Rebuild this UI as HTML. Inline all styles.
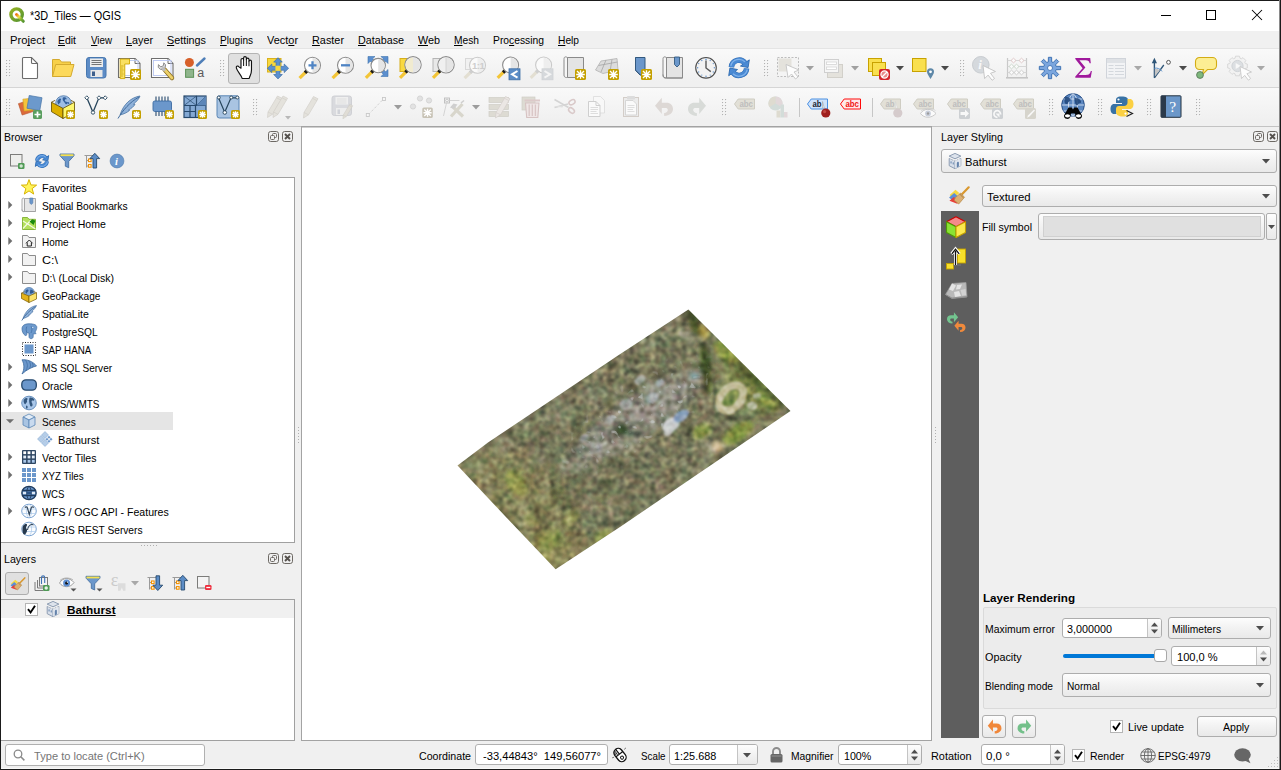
<!DOCTYPE html>
<html lang="en"><head><meta charset="utf-8"><title>*3D_Tiles — QGIS</title>
<style>
*{box-sizing:border-box;margin:0;padding:0}
html,body{width:1281px;height:770px;overflow:hidden}
body{background:#f0f0f0;font-family:"Liberation Sans",sans-serif;font-size:11px;color:#000;position:relative}
.a{position:absolute}
.t{position:absolute;white-space:nowrap;transform-origin:0 0}
u{text-decoration:underline;text-underline-offset:1px;text-decoration-skip-ink:none}
svg{overflow:visible}
</style></head>
<body>
<div class="a" style="left:0px;top:0px;width:1281px;height:31px;background:#fff;"></div>
<svg class="a" style="left:9px;top:7px;" width="16" height="16" viewBox="0 0 16 16"><defs><linearGradient id="qg" x1="0" y1="0" x2="1" y2="1"><stop offset="0" stop-color="#93b023"/><stop offset="1" stop-color="#589632"/></linearGradient><linearGradient id="qh" x1="0" y1="0" x2="1" y2="1"><stop offset="0" stop-color="#ee7913"/><stop offset="0.35" stop-color="#f0e64a"/><stop offset="0.7" stop-color="#80b02c"/><stop offset="1" stop-color="#589632"/></linearGradient></defs><circle cx="7.600" cy="7.600" r="5.700" fill="#fff" stroke="url(#qg)" stroke-width="3.400"/><path d="M7.500 7.500l6.800 6.800" stroke="url(#qh)" stroke-width="3" stroke-linecap="round"/></svg>
<div class="t" style="left:30px;top:7.84px;font-size:12px;line-height:16px;color:#000;transform:scaleX(0.9078);">*3D_Tiles — QGIS</div>
<svg class="a" style="left:1150px;top:0px;" width="131" height="31" viewBox="0 0 131 31"><path d="M11 15.500h10" stroke="#000" stroke-width="1" fill="none"/><rect x="56.500" y="10.500" width="9" height="9" stroke="#000" fill="none"/><path d="M102 10l10 10M112 10l-10 10" stroke="#000" stroke-width="1.050" fill="none"/></svg>
<div class="t" style="left:10px;top:32.32px;font-size:11.5px;line-height:16px;color:#000;transform:scaleX(0.9779);">Pro<u>j</u>ect</div>
<div class="t" style="left:58px;top:32.32px;font-size:11.5px;line-height:16px;color:#000;transform:scaleX(0.9084);"><u>E</u>dit</div>
<div class="t" style="left:91px;top:32.32px;font-size:11.5px;line-height:16px;color:#000;transform:scaleX(0.8496);"><u>V</u>iew</div>
<div class="t" style="left:126px;top:32.32px;font-size:11.5px;line-height:16px;color:#000;transform:scaleX(0.9387);"><u>L</u>ayer</div>
<div class="t" style="left:167px;top:32.32px;font-size:11.5px;line-height:16px;color:#000;transform:scaleX(0.9386);"><u>S</u>ettings</div>
<div class="t" style="left:220px;top:32.32px;font-size:11.5px;line-height:16px;color:#000;transform:scaleX(0.8750);"><u>P</u>lugins</div>
<div class="t" style="left:267px;top:32.32px;font-size:11.5px;line-height:16px;color:#000;transform:scaleX(0.9509);">Vect<u>o</u>r</div>
<div class="t" style="left:312px;top:32.32px;font-size:11.5px;line-height:16px;color:#000;transform:scaleX(0.9448);"><u>R</u>aster</div>
<div class="t" style="left:358px;top:32.32px;font-size:11.5px;line-height:16px;color:#000;transform:scaleX(0.9345);"><u>D</u>atabase</div>
<div class="t" style="left:418px;top:32.32px;font-size:11.5px;line-height:16px;color:#000;transform:scaleX(0.9387);"><u>W</u>eb</div>
<div class="t" style="left:454px;top:32.32px;font-size:11.5px;line-height:16px;color:#000;transform:scaleX(0.8891);"><u>M</u>esh</div>
<div class="t" style="left:493px;top:32.32px;font-size:11.5px;line-height:16px;color:#000;transform:scaleX(0.8965);">Pro<u>c</u>essing</div>
<div class="t" style="left:558px;top:32.32px;font-size:11.5px;line-height:16px;color:#000;transform:scaleX(0.8879);"><u>H</u>elp</div>
<div class="a" style="left:0px;top:48px;width:1281px;height:1px;background:#e4e4e4;"></div>
<div class="a" style="left:0px;top:49px;width:1281px;height:38px;background:linear-gradient(#f9f9f9,#f0f0f0 85%);"></div>
<div class="a" style="left:0px;top:88px;width:1281px;height:38px;background:linear-gradient(#f9f9f9,#f0f0f0 85%);"></div>
<div class="a" style="left:0px;top:87px;width:1281px;height:1px;background:#d5d5d5;"></div>
<div class="a" style="left:0px;top:126px;width:1281px;height:1px;background:#c3c3c3;"></div>
<svg class="a" style="left:6px;top:60px;" width="5" height="18" viewBox="0 0 5 18"><rect x="0.6" y="0.6" width="1" height="1" fill="#fbfbfb"/><rect x="0" y="0" width="1.1" height="1.1" fill="#b2b2b2"/><rect x="3.6" y="0.6" width="1" height="1" fill="#fbfbfb"/><rect x="3" y="0" width="1.1" height="1.1" fill="#b2b2b2"/><rect x="0.6" y="3.6" width="1" height="1" fill="#fbfbfb"/><rect x="0" y="3" width="1.1" height="1.1" fill="#b2b2b2"/><rect x="3.6" y="3.6" width="1" height="1" fill="#fbfbfb"/><rect x="3" y="3" width="1.1" height="1.1" fill="#b2b2b2"/><rect x="0.6" y="6.6" width="1" height="1" fill="#fbfbfb"/><rect x="0" y="6" width="1.1" height="1.1" fill="#b2b2b2"/><rect x="3.6" y="6.6" width="1" height="1" fill="#fbfbfb"/><rect x="3" y="6" width="1.1" height="1.1" fill="#b2b2b2"/><rect x="0.6" y="9.6" width="1" height="1" fill="#fbfbfb"/><rect x="0" y="9" width="1.1" height="1.1" fill="#b2b2b2"/><rect x="3.6" y="9.6" width="1" height="1" fill="#fbfbfb"/><rect x="3" y="9" width="1.1" height="1.1" fill="#b2b2b2"/><rect x="0.6" y="12.6" width="1" height="1" fill="#fbfbfb"/><rect x="0" y="12" width="1.1" height="1.1" fill="#b2b2b2"/><rect x="3.6" y="12.6" width="1" height="1" fill="#fbfbfb"/><rect x="3" y="12" width="1.1" height="1.1" fill="#b2b2b2"/><rect x="0.6" y="15.6" width="1" height="1" fill="#fbfbfb"/><rect x="0" y="15" width="1.1" height="1.1" fill="#b2b2b2"/><rect x="3.6" y="15.6" width="1" height="1" fill="#fbfbfb"/><rect x="3" y="15" width="1.1" height="1.1" fill="#b2b2b2"/></svg>
<svg class="a" style="left:18px;top:56px;" width="24" height="24" viewBox="0 0 24 24"><path d="M4.500 2.500a1 1 0 0 1 1-1h8l6 6v14a1 1 0 0 1-1 1h-13a1 1 0 0 1-1-1z" fill="#fff" stroke="#6b6b6b" stroke-width="1.100"/><path d="M13.500 1.500v5a1 1 0 0 0 1 1h5" fill="none" stroke="#6b6b6b" stroke-width="1.100"/></svg>
<svg class="a" style="left:51px;top:56px;" width="24" height="24" viewBox="0 0 24 24"><path d="M1.5 20.5v-17h7l2 2.5h9v3" fill="#f7d04a" stroke="#d4aa2f"/><path d="M1.5 20.5l3.2-12h18.3l-3.2 12z" fill="#fcd95c" stroke="#d4aa2f"/></svg>
<svg class="a" style="left:84px;top:56px;" width="24" height="24" viewBox="0 0 24 24"><rect x="2.5" y="1.5" width="19.5" height="20.5" rx="2.5" fill="#5d8cc6" stroke="#4878b0"/><rect x="6" y="2.5" width="13" height="8.5" fill="#ececec"/><path d="M7.5 4.5h10M7.5 6.5h10M7.5 8.5h10" stroke="#666" stroke-width="0.9"/><rect x="6.5" y="14" width="12" height="7" fill="#e8e8e8"/><rect x="8" y="15.5" width="3" height="4.5" fill="#3e5f8c"/></svg>
<svg class="a" style="left:117px;top:56px;" width="24" height="24" viewBox="0 0 24 24"><path d="M1.500 2.500h16.500l5 5v14h-21.500z" fill="#fff" stroke="#6e6e6e" stroke-width="1.100" stroke-linejoin="round"/><path d="M18 2.500v5h5" fill="#f6f6f6" stroke="#6e6e6e" stroke-width="1" stroke-linejoin="round"/><rect x="7.500" y="4.500" width="13.500" height="15" fill="none" stroke="#b8c8f0" stroke-width="0.900"/><path d="M3.200 3h9.300v5h-4.700v14.600h-4.600z" fill="#f9e062" stroke="#d2a800" stroke-width="0.900" stroke-linejoin="round"/><path d="M4 10h2.500M4 12h1.800M4 14h2.500M4 16h1.800M4 18h2.500M4 20h1.800" stroke="#c09a00" stroke-width="0.700"/><rect x="13" y="13" width="11" height="11" rx="1.6" fill="#c4a000"/><path d="M18.5 14.2V22.8M14.2 18.5H22.8M15 15L22 22M22 15L15 22" stroke="#fff" stroke-width="1.35" fill="none"/><circle cx="18.5" cy="18.5" r="0.9" fill="#fff"/></svg>
<svg class="a" style="left:150px;top:56px;" width="24" height="24" viewBox="0 0 24 24"><path d="M1.500 2.500h16.500l5 5v14h-21.500z" fill="#fff" stroke="#6e6e6e" stroke-width="1.100" stroke-linejoin="round"/><path d="M18 2.500v5h5" fill="#f6f6f6" stroke="#6e6e6e" stroke-width="1" stroke-linejoin="round"/><rect x="3.500" y="4.500" width="17.500" height="15" fill="none" stroke="#b9c6f2" stroke-width="0.900"/><path d="M14.500 13.500l7.500 8.500" stroke="#8a6d1f" stroke-width="4.400" stroke-linecap="round"/><path d="M14.500 13.500l7.500 8.500" stroke="#ecd06a" stroke-width="2.800" stroke-linecap="round"/><path d="M8.400 8.600a3.700 3.700 0 1 0 5.400-1.800l-0.500 3-2.500 1z" fill="#dcdcdc" stroke="#868686" stroke-width="0.900"/><path d="M12 11.500l3 3.200" stroke="#bdbdbd" stroke-width="2.800"/></svg>
<svg class="a" style="left:183px;top:56px;" width="24" height="24" viewBox="0 0 24 24"><circle cx="6.4" cy="6.5" r="4.5" fill="#d7602a"/><path d="M14 9.5l7.5-7" stroke="#4f7fb8" stroke-width="2.4" stroke-linecap="round"/><rect x="2.6" y="13.3" width="8" height="8" fill="#8fb58c" stroke="#5c9158" stroke-width="1"/><text x="14.300" y="20.900" font-family="Liberation Sans,sans-serif" font-size="12.500" fill="#5a5a5a">a</text></svg>
<svg class="a" style="left:220px;top:60px;" width="5" height="18" viewBox="0 0 5 18"><rect x="0.6" y="0.6" width="1" height="1" fill="#fbfbfb"/><rect x="0" y="0" width="1.1" height="1.1" fill="#b2b2b2"/><rect x="3.6" y="0.6" width="1" height="1" fill="#fbfbfb"/><rect x="3" y="0" width="1.1" height="1.1" fill="#b2b2b2"/><rect x="0.6" y="3.6" width="1" height="1" fill="#fbfbfb"/><rect x="0" y="3" width="1.1" height="1.1" fill="#b2b2b2"/><rect x="3.6" y="3.6" width="1" height="1" fill="#fbfbfb"/><rect x="3" y="3" width="1.1" height="1.1" fill="#b2b2b2"/><rect x="0.6" y="6.6" width="1" height="1" fill="#fbfbfb"/><rect x="0" y="6" width="1.1" height="1.1" fill="#b2b2b2"/><rect x="3.6" y="6.6" width="1" height="1" fill="#fbfbfb"/><rect x="3" y="6" width="1.1" height="1.1" fill="#b2b2b2"/><rect x="0.6" y="9.6" width="1" height="1" fill="#fbfbfb"/><rect x="0" y="9" width="1.1" height="1.1" fill="#b2b2b2"/><rect x="3.6" y="9.6" width="1" height="1" fill="#fbfbfb"/><rect x="3" y="9" width="1.1" height="1.1" fill="#b2b2b2"/><rect x="0.6" y="12.6" width="1" height="1" fill="#fbfbfb"/><rect x="0" y="12" width="1.1" height="1.1" fill="#b2b2b2"/><rect x="3.6" y="12.6" width="1" height="1" fill="#fbfbfb"/><rect x="3" y="12" width="1.1" height="1.1" fill="#b2b2b2"/><rect x="0.6" y="15.6" width="1" height="1" fill="#fbfbfb"/><rect x="0" y="15" width="1.1" height="1.1" fill="#b2b2b2"/><rect x="3.6" y="15.6" width="1" height="1" fill="#fbfbfb"/><rect x="3" y="15" width="1.1" height="1.1" fill="#b2b2b2"/></svg>
<div class="a" style="left:228px;top:53px;width:32px;height:31px;background:#e0e0e0;border:1px solid #b4b4b4;border-radius:3px;"></div>
<svg class="a" style="left:232px;top:56px;" width="24" height="24" viewBox="0 0 24 24"><g transform="translate(12.300,12) scale(1.140) translate(-11.200,-12.300)"><path d="M8.3 12.500V5.200c0-1.700 2.300-1.700 2.300 0V3.600c0-1.700 2.400-1.700 2.400 0v1.200c0-1.600 2.300-1.600 2.300 0v1.700c0-1.500 2.200-1.500 2.200 0V14c0 4-1.500 5-2 7.500H9.300C8.600 18.500 5 15.500 4.200 12.200c-.4-1.600 1.500-2.200 2.300-.9z" fill="#fff" stroke="#111" stroke-width="1" stroke-linejoin="round"/><path d="M10.600 5.200v5.300M13 4.800v5.700M15.300 6.500v4.200" stroke="#111" stroke-width="0.900" fill="none"/></g></svg>
<svg class="a" style="left:265px;top:56px;" width="24" height="24" viewBox="0 0 24 24"><rect x="2.500" y="2.500" width="13.500" height="13.500" fill="#f8d73c" stroke="#d9b11d"/><path d="M13.0 1.7 L17.3 6.1 L14.9 6.1 L14.9 10.4 L19.2 10.4 L19.2 8.0 L23.6 12.3 L19.2 16.6 L19.2 14.2 L14.9 14.2 L14.9 18.5 L17.3 18.5 L13.0 22.9 L8.7 18.5 L11.1 18.5 L11.1 14.2 L6.8 14.2 L6.8 16.6 L2.4 12.3 L6.8 8.0 L6.8 10.4 L11.1 10.4 L11.1 6.1 L8.7 6.1z" fill="#5a8fd0" stroke="#3c6ea8" stroke-width="0.700" stroke-linejoin="round"/><rect x="10.4" y="9.700000000000001" width="5.200" height="5.200" fill="#f8d73c"/></svg>
<svg class="a" style="left:298px;top:56px;" width="24" height="24" viewBox="0 0 24 24"><path d="M8.8 15.0L1.6 22.2" stroke="#f3c537" stroke-width="3.2" stroke-linecap="butt"/><path d="M9.4 14.4L7.0 16.8" stroke="#1a1a1a" stroke-width="3.4"/><circle cx="14.5" cy="9.3" r="8" fill="#ffffff" stroke="#8c8c8c" stroke-width="1.1"/><path d="M14.5 2.1000000000000005A7.2 7.2 0 0 1 14.5 16.5z" fill="#e2e2e2" opacity="0.9"/><path d="M10.5 9.3h8M14.5 5.3v8" stroke="#4f84c4" stroke-width="2.3"/></svg>
<svg class="a" style="left:331px;top:56px;" width="24" height="24" viewBox="0 0 24 24"><path d="M8.8 15.0L1.6 22.2" stroke="#f3c537" stroke-width="3.2" stroke-linecap="butt"/><path d="M9.4 14.4L7.0 16.8" stroke="#1a1a1a" stroke-width="3.4"/><circle cx="14.5" cy="9.3" r="8" fill="#ffffff" stroke="#8c8c8c" stroke-width="1.1"/><path d="M14.5 2.1000000000000005A7.2 7.2 0 0 1 14.5 16.5z" fill="#e2e2e2" opacity="0.9"/><path d="M10 9.3h9" stroke="#4f84c4" stroke-width="2.3"/></svg>
<svg class="a" style="left:364px;top:56px;" width="24" height="24" viewBox="0 0 24 24"><path d="M4 0.5h7l-2.3 2.3 3 3-2.4 2.4-3-3L4 7.5zM24 0.5h-7l2.3 2.3-3 3 2.4 2.4 3-3L24 7.5zM24 20.5h-7l2.3-2.3-3-3 2.4-2.4 3 3 2.3-2.3z" fill="#5b8fcf" stroke="#3f73ad" stroke-width="0.6"/><path d="M9.1 14.7L1.9 21.9" stroke="#f3c537" stroke-width="3.2" stroke-linecap="butt"/><path d="M9.7 14.1L7.3 16.5" stroke="#1a1a1a" stroke-width="3.4"/><circle cx="14.2" cy="9.6" r="7.2" fill="#ffffff" stroke="#8c8c8c" stroke-width="1.1"/><path d="M14.2 3.1999999999999993A6.4 6.4 0 0 1 14.2 16.0z" fill="#e2e2e2" opacity="0.9"/></svg>
<svg class="a" style="left:397px;top:56px;" width="24" height="24" viewBox="0 0 24 24"><rect x="3" y="2.5" width="10" height="13" fill="#f9d93e" stroke="#d6ae1c"/><path d="M10.2 14.6L3.0 21.8" stroke="#f3c537" stroke-width="3.2" stroke-linecap="butt"/><path d="M10.8 14.0L8.4 16.4" stroke="#1a1a1a" stroke-width="3.4"/><circle cx="16" cy="8.8" r="8.2" fill="#ffffff" stroke="#8c8c8c" stroke-width="1.1"/><path d="M16 1.4000000000000015A7.3999999999999995 7.3999999999999995 0 0 1 16 16.2z" fill="#e2e2e2" opacity="0.9"/><path d="M16 1.4A7.4 7.4 0 0 0 16 16.2z" fill="#efe7c8" opacity="0.85"/></svg>
<svg class="a" style="left:430px;top:56px;" width="24" height="24" viewBox="0 0 24 24"><rect x="3" y="2.5" width="10" height="13" fill="#e8e8e8" stroke="#b5b5b5"/><path d="M10.2 14.6L3.0 21.8" stroke="#f3c537" stroke-width="3.2" stroke-linecap="butt"/><path d="M10.8 14.0L8.4 16.4" stroke="#1a1a1a" stroke-width="3.4"/><circle cx="16" cy="8.8" r="8.2" fill="#ffffff" stroke="#8c8c8c" stroke-width="1.1"/><path d="M16 1.4000000000000015A7.3999999999999995 7.3999999999999995 0 0 1 16 16.2z" fill="#e2e2e2" opacity="0.9"/><path d="M16 1.4A7.4 7.4 0 0 0 16 16.2z" fill="#ededed" opacity="0.85"/><path d="M16 1.4v14.8" stroke="#c8c8c8" stroke-width="0.7"/></svg>
<svg class="a" style="left:463px;top:56px;" width="24" height="24" viewBox="0 0 24 24"><rect x="2.5" y="2.5" width="9" height="11" fill="#f1f1f1" stroke="#d8d8d8"/><path d="M8.8 15.0L1.6 22.2" stroke="#e3dfd2" stroke-width="3.2" stroke-linecap="butt"/><path d="M9.4 14.4L7.0 16.8" stroke="#cfcfcf" stroke-width="3.4"/><circle cx="14.5" cy="9.3" r="8" fill="#fafafa" stroke="#c9c9c9" stroke-width="1.1"/><path d="M14.5 2.1000000000000005A7.2 7.2 0 0 1 14.5 16.5z" fill="#ececec" opacity="0.9"/><text x="9" y="13" font-family="Liberation Sans,sans-serif" font-size="9.5" font-weight="bold" fill="#cdcdcd" letter-spacing="-0.5">1:1</text></svg>
<svg class="a" style="left:496px;top:56px;" width="24" height="24" viewBox="0 0 24 24"><path d="M8.9 14.7L1.7 21.9" stroke="#f3c537" stroke-width="3.2" stroke-linecap="butt"/><path d="M9.5 14.1L7.1 16.5" stroke="#1a1a1a" stroke-width="3.4"/><circle cx="14.6" cy="9" r="8" fill="#ffffff" stroke="#8c8c8c" stroke-width="1.1"/><path d="M14.6 1.8A7.2 7.2 0 0 1 14.6 16.2z" fill="#e2e2e2" opacity="0.9"/><rect x="13" y="12.8" width="11" height="11" fill="#5b8cc6" stroke="#3e6ea5" stroke-width="0.8"/><path d="M21.5 15l-5.5 3.3 5.5 3.3" fill="none" stroke="#fff" stroke-width="2"/></svg>
<svg class="a" style="left:529px;top:56px;" width="24" height="24" viewBox="0 0 24 24"><path d="M8.9 14.7L1.7 21.9" stroke="#e3dfd2" stroke-width="3.2" stroke-linecap="butt"/><path d="M9.5 14.1L7.1 16.5" stroke="#cfcfcf" stroke-width="3.4"/><circle cx="14.6" cy="9" r="8" fill="#fafafa" stroke="#c9c9c9" stroke-width="1.1"/><path d="M14.6 1.8A7.2 7.2 0 0 1 14.6 16.2z" fill="#ececec" opacity="0.9"/><rect x="13" y="12.8" width="11" height="11" fill="#d6d9dc" stroke="#cfd2d5" stroke-width="0.8"/><path d="M15.5 15l5.5 3.3-5.5 3.3" fill="none" stroke="#f4f4f4" stroke-width="2"/></svg>
<svg class="a" style="left:562px;top:56px;" width="24" height="24" viewBox="0 0 24 24"><path d="M5.5 1.5h16v20h-16z" fill="#e4e4e4" stroke="#8a8a8a"/><path d="M5.500 1.500c-3-1.500-3.500 0-3.500 2v15.500c0 3 3 2.500 3.500 2.500z" fill="#f6f6f6" stroke="#8a8a8a"/><rect x="13" y="13" width="11" height="11" rx="1.6" fill="#c4a000"/><path d="M18.5 14.2V22.8M14.2 18.5H22.8M15 15L22 22M22 15L15 22" stroke="#fff" stroke-width="1.35" fill="none"/><circle cx="18.5" cy="18.5" r="0.9" fill="#fff"/></svg>
<svg class="a" style="left:595px;top:56px;" width="24" height="24" viewBox="0 0 24 24"><path d="M6 5l16-2.500 1 11.500-15 3.500-7.500-3.500z" fill="#dcdcdc" stroke="#b2b2b2" stroke-width="0.8"/><path d="M3.500 9.500l19-3.500M11 4l-5 12M17 3.300l-2 12.500" stroke="#a4a4a4" stroke-width="0.8" fill="none"/><rect x="13" y="13" width="11" height="11" rx="1.6" fill="#c4a000"/><path d="M18.5 14.2V22.8M14.2 18.5H22.8M15 15L22 22M22 15L15 22" stroke="#fff" stroke-width="1.35" fill="none"/><circle cx="18.5" cy="18.5" r="0.9" fill="#fff"/></svg>
<svg class="a" style="left:628px;top:56px;" width="24" height="24" viewBox="0 0 24 24"><path d="M7.500 1.500h9.500v20.500l-4.500-3-5-5z" fill="#6b97cb" stroke="#33597f" stroke-width="1"/><path d="M7.500 1.500v13l5 5" fill="none" stroke="#33597f"/><rect x="13" y="13" width="11" height="11" rx="1.6" fill="#c4a000"/><path d="M18.5 14.2V22.8M14.2 18.5H22.8M15 15L22 22M22 15L15 22" stroke="#fff" stroke-width="1.35" fill="none"/><circle cx="18.5" cy="18.5" r="0.9" fill="#fff"/></svg>
<svg class="a" style="left:661px;top:56px;" width="24" height="24" viewBox="0 0 24 24"><path d="M5.500 1.500h16v20.500h-16z" fill="#e4e4e4" stroke="#8a8a8a"/><path d="M5.500 1.500c-3-1.500-3.500 0-3.500 2v16c0 3 3 2.500 3.500 2.500z" fill="#f6f6f6" stroke="#8a8a8a"/><path d="M2 18.500c0 2.500 1.500 3.500 3.500 3.500h16" fill="none" stroke="#8a8a8a"/><path d="M13.500 1h5v7.500l-2.500 2.500-2.500-2.500z" fill="#6b97cb" stroke="#33597f" stroke-width="0.9"/></svg>
<svg class="a" style="left:694px;top:56px;" width="24" height="24" viewBox="0 0 24 24"><circle cx="12" cy="11.800" r="10.300" fill="#f2f2f2" stroke="#4e4e4e" stroke-width="1.100"/><g fill="#6b97cb"><circle cx="12" cy="3.400" r="0.800"/><circle cx="12" cy="20.200" r="0.800"/><circle cx="3.600" cy="11.800" r="0.800"/><circle cx="20.400" cy="11.800" r="0.800"/><circle cx="16.200" cy="4.500" r="0.700"/><circle cx="19.300" cy="7.600" r="0.700"/><circle cx="19.300" cy="16" r="0.700"/><circle cx="16.200" cy="19.100" r="0.700"/><circle cx="7.800" cy="19.100" r="0.700"/><circle cx="4.700" cy="16" r="0.700"/><circle cx="4.700" cy="7.600" r="0.700"/><circle cx="7.800" cy="4.500" r="0.700"/></g><path d="M12 4.500v7.500l4.800 3.600" fill="none" stroke="#5a5a5a" stroke-width="1.400"/></svg>
<svg class="a" style="left:727px;top:56px;" width="24" height="24" viewBox="0 0 24 24"><path d="M4.43 11.14A7.6 7.6 0 0 1 18.23 7.44" fill="none" stroke="#2e6ab0" stroke-width="5.5"/><path d="M22.30 3.85L13.46 10.05L21.09 11.54z" fill="#4a8ad4" stroke="#2e6ab0" stroke-width="0.9" stroke-linejoin="round"/><path d="M4.43 11.14A7.6 7.6 0 0 1 18.23 7.44" fill="none" stroke="#4a8ad4" stroke-width="4.6"/><path d="M3.79 9.90A8.43 8.43 0 0 1 17.96 5.84" fill="none" stroke="#8fbdf0" stroke-width="1.29" opacity="0.8"/><path d="M19.57 12.46A7.6 7.6 0 0 1 5.77 16.16" fill="none" stroke="#2e6ab0" stroke-width="5.5"/><path d="M1.70 19.75L10.54 13.55L2.91 12.06z" fill="#4a8ad4" stroke="#2e6ab0" stroke-width="0.9" stroke-linejoin="round"/><path d="M19.57 12.46A7.6 7.6 0 0 1 5.77 16.16" fill="none" stroke="#4a8ad4" stroke-width="4.6"/><path d="M20.21 13.70A8.43 8.43 0 0 1 6.04 17.76" fill="none" stroke="#8fbdf0" stroke-width="1.29" opacity="0.8"/></svg>
<svg class="a" style="left:764px;top:60px;" width="5" height="18" viewBox="0 0 5 18"><rect x="0.6" y="0.6" width="1" height="1" fill="#fbfbfb"/><rect x="0" y="0" width="1.1" height="1.1" fill="#b2b2b2"/><rect x="3.6" y="0.6" width="1" height="1" fill="#fbfbfb"/><rect x="3" y="0" width="1.1" height="1.1" fill="#b2b2b2"/><rect x="0.6" y="3.6" width="1" height="1" fill="#fbfbfb"/><rect x="0" y="3" width="1.1" height="1.1" fill="#b2b2b2"/><rect x="3.6" y="3.6" width="1" height="1" fill="#fbfbfb"/><rect x="3" y="3" width="1.1" height="1.1" fill="#b2b2b2"/><rect x="0.6" y="6.6" width="1" height="1" fill="#fbfbfb"/><rect x="0" y="6" width="1.1" height="1.1" fill="#b2b2b2"/><rect x="3.6" y="6.6" width="1" height="1" fill="#fbfbfb"/><rect x="3" y="6" width="1.1" height="1.1" fill="#b2b2b2"/><rect x="0.6" y="9.6" width="1" height="1" fill="#fbfbfb"/><rect x="0" y="9" width="1.1" height="1.1" fill="#b2b2b2"/><rect x="3.6" y="9.6" width="1" height="1" fill="#fbfbfb"/><rect x="3" y="9" width="1.1" height="1.1" fill="#b2b2b2"/><rect x="0.6" y="12.6" width="1" height="1" fill="#fbfbfb"/><rect x="0" y="12" width="1.1" height="1.1" fill="#b2b2b2"/><rect x="3.6" y="12.6" width="1" height="1" fill="#fbfbfb"/><rect x="3" y="12" width="1.1" height="1.1" fill="#b2b2b2"/><rect x="0.6" y="15.6" width="1" height="1" fill="#fbfbfb"/><rect x="0" y="15" width="1.1" height="1.1" fill="#b2b2b2"/><rect x="3.6" y="15.6" width="1" height="1" fill="#fbfbfb"/><rect x="3" y="15" width="1.1" height="1.1" fill="#b2b2b2"/></svg>
<svg class="a" style="left:776px;top:56px;" width="24" height="24" viewBox="0 0 24 24"><rect x="1.500" y="1.500" width="21" height="19" fill="#f4f4f4" stroke="#bdbdbd" stroke-dasharray="2 1.500"/><rect x="2.500" y="2.500" width="13" height="13" fill="#e4e2dc"/><path d="M10 8.500l13 5.500-5 2 4 5-2.500 2-4-5-3.500 3.500z" fill="#fdfdfd" stroke="#c4c4c4" stroke-width="0.900"/></svg>
<svg class="a" style="left:806px;top:66px;" width="8" height="5" viewBox="0 0 8 5"><path d="M0 0h8l-4 4.5z" fill="#a0a0a0"/></svg>
<svg class="a" style="left:821px;top:56px;" width="24" height="24" viewBox="0 0 24 24"><rect x="6.500" y="8.500" width="15" height="13" fill="#e4e2dc" stroke="#d2d0ca"/><rect x="3.500" y="3.500" width="14" height="13" fill="#f6f6f6" stroke="#cfcfcf"/><rect x="5.500" y="6" width="10" height="2.500" fill="#fff" stroke="#d4d4d4" stroke-width="0.800"/><rect x="5.500" y="11" width="10" height="2.500" fill="#fff" stroke="#d4d4d4" stroke-width="0.800"/></svg>
<svg class="a" style="left:851px;top:66px;" width="8" height="5" viewBox="0 0 8 5"><path d="M0 0h8l-4 4.5z" fill="#a0a0a0"/></svg>
<svg class="a" style="left:867px;top:56px;" width="24" height="24" viewBox="0 0 24 24"><rect x="1.500" y="2.500" width="13" height="13" fill="#f9e04f" stroke="#c8a200"/><rect x="5.500" y="6.500" width="13" height="13" fill="#f9e04f" stroke="#c8a200"/><rect x="12" y="13" width="11" height="11" rx="2" fill="#d4242a"/><circle cx="17.500" cy="18.500" r="3.600" fill="#e88a8a" stroke="#fff" stroke-width="1.200"/><path d="M15 21l5-5" stroke="#fff" stroke-width="1.300"/></svg>
<svg class="a" style="left:896px;top:66px;" width="8" height="5" viewBox="0 0 8 5"><path d="M0 0h8l-4 4.5z" fill="#4a4a4a"/></svg>
<svg class="a" style="left:911px;top:56px;" width="24" height="24" viewBox="0 0 24 24"><rect x="1.500" y="2.500" width="13.500" height="13" fill="#f9e04f" stroke="#c8a200"/><path d="M19.500 23c-2-3.500-3.500-5-3.500-7.200a3.500 3.500 0 0 1 7 0c0 2.200-1.500 3.700-3.500 7.200z" fill="#5e88a8"/><circle cx="19.500" cy="15.800" r="1.400" fill="#fff"/></svg>
<svg class="a" style="left:941px;top:66px;" width="8" height="5" viewBox="0 0 8 5"><path d="M0 0h8l-4 4.5z" fill="#4a4a4a"/></svg>
<svg class="a" style="left:960px;top:60px;" width="5" height="18" viewBox="0 0 5 18"><rect x="0.6" y="0.6" width="1" height="1" fill="#fbfbfb"/><rect x="0" y="0" width="1.1" height="1.1" fill="#b2b2b2"/><rect x="3.6" y="0.6" width="1" height="1" fill="#fbfbfb"/><rect x="3" y="0" width="1.1" height="1.1" fill="#b2b2b2"/><rect x="0.6" y="3.6" width="1" height="1" fill="#fbfbfb"/><rect x="0" y="3" width="1.1" height="1.1" fill="#b2b2b2"/><rect x="3.6" y="3.6" width="1" height="1" fill="#fbfbfb"/><rect x="3" y="3" width="1.1" height="1.1" fill="#b2b2b2"/><rect x="0.6" y="6.6" width="1" height="1" fill="#fbfbfb"/><rect x="0" y="6" width="1.1" height="1.1" fill="#b2b2b2"/><rect x="3.6" y="6.6" width="1" height="1" fill="#fbfbfb"/><rect x="3" y="6" width="1.1" height="1.1" fill="#b2b2b2"/><rect x="0.6" y="9.6" width="1" height="1" fill="#fbfbfb"/><rect x="0" y="9" width="1.1" height="1.1" fill="#b2b2b2"/><rect x="3.6" y="9.6" width="1" height="1" fill="#fbfbfb"/><rect x="3" y="9" width="1.1" height="1.1" fill="#b2b2b2"/><rect x="0.6" y="12.6" width="1" height="1" fill="#fbfbfb"/><rect x="0" y="12" width="1.1" height="1.1" fill="#b2b2b2"/><rect x="3.6" y="12.6" width="1" height="1" fill="#fbfbfb"/><rect x="3" y="12" width="1.1" height="1.1" fill="#b2b2b2"/><rect x="0.6" y="15.6" width="1" height="1" fill="#fbfbfb"/><rect x="0" y="15" width="1.1" height="1.1" fill="#b2b2b2"/><rect x="3.6" y="15.6" width="1" height="1" fill="#fbfbfb"/><rect x="3" y="15" width="1.1" height="1.1" fill="#b2b2b2"/></svg>
<svg class="a" style="left:972px;top:56px;" width="24" height="24" viewBox="0 0 24 24"><circle cx="8.800" cy="8.800" r="8.300" fill="#d5d9dd" stroke="#c9cdd1"/><text x="6.300" y="13.200" font-family="Liberation Serif,serif" font-style="italic" font-weight="bold" font-size="13" fill="#f8f8f8">i</text><path d="M11 9.500l12.500 6-5 1.800 4 5.200-2.400 1.800-4-5.200-3.500 3.500z" fill="#fdfdfd" stroke="#c2c2c2" stroke-width="0.900"/></svg>
<svg class="a" style="left:1005px;top:56px;" width="24" height="24" viewBox="0 0 24 24"><path d="M2.500 2v19M21.500 2v19" stroke="#c9c9c9" stroke-width="1.200"/><path d="M1 21.800h22" stroke="#c4c4c4" stroke-width="1.600"/><path d="M2.500 4.500h19M2.500 10.500h19M2.500 16.500h19" stroke="#d2d2d2" stroke-width="0.900"/><g fill="#fafafa" stroke-width="0.900"><path d="M6 4.500l2.500-2.300 2.500 2.300-2.500 2.300zM14 4.500l2.500-2.300 2.500 2.300-2.500 2.300z" stroke="#dcc4c4"/><path d="M4 10.500l2.500-2.300 2.500 2.300-2.500 2.300zM9 10.500l2.500-2.300 2.500 2.300-2.500 2.300z" stroke="#c9d6c9"/><path d="M4 16.500l2.500-2.300 2.500 2.300-2.500 2.300zM9 16.500l2.500-2.300 2.500 2.300-2.500 2.300zM14 16.500l2.500-2.300 2.500 2.300-2.500 2.300z" stroke="#c9c9c9"/></g></svg>
<svg class="a" style="left:1038px;top:56px;" width="24" height="24" viewBox="0 0 24 24"><path d="M10.39 1.32 L13.61 1.32 L13.68 5.93 L15.11 6.52 L18.41 3.31 L20.69 5.59 L17.48 8.89 L18.07 10.32 L22.68 10.39 L22.68 13.61 L18.07 13.68 L17.48 15.11 L20.69 18.41 L18.41 20.69 L15.11 17.48 L13.68 18.07 L13.61 22.68 L10.39 22.68 L10.32 18.07 L8.89 17.48 L5.59 20.69 L3.31 18.41 L6.52 15.11 L5.93 13.68 L1.32 13.61 L1.32 10.39 L5.93 10.32 L6.52 8.89 L3.31 5.59 L5.59 3.31 L8.89 6.52 L10.32 5.93z" fill="#7ba6de" stroke="#3f73b4" stroke-width="1" stroke-linejoin="round"/><circle cx="12" cy="12" r="2.500" fill="#fff" stroke="#3f73b4" stroke-width="0.900"/></svg>
<svg class="a" style="left:1071px;top:56px;" width="24" height="24" viewBox="0 0 24 24"><path d="M4.300 2h14.900l.6 5.300h-1.200c-.5-2.400-1.400-3.100-3.800-3.100H8.400l6 7.200-6.800 7.600h7.400c3 0 4-.9 4.800-3.900h1.100l-1.200 6.600H4.300v-1.100l7.300-8.400L4.300 3.100z" fill="#a0199c"/></svg>
<svg class="a" style="left:1104px;top:56px;" width="24" height="24" viewBox="0 0 24 24"><rect x="2.500" y="2.500" width="19" height="19.500" fill="#f2f3f5" stroke="#d0d4da"/><rect x="3" y="3" width="18" height="4" fill="#dfe2e6"/><path d="M4.500 9.500h5M11 9.500h9M4.500 12.500h5M11 12.500h9M4.500 15.500h5M11 15.500h9M4.500 18.500h5M11 18.500h9" stroke="#d4d8dd" stroke-width="1"/></svg>
<svg class="a" style="left:1134px;top:66px;" width="8" height="5" viewBox="0 0 8 5"><path d="M0 0h8l-4 4.5z" fill="#a8a8a8"/></svg>
<svg class="a" style="left:1149px;top:56px;" width="24" height="24" viewBox="0 0 24 24"><path d="M5.400 21.800V5" stroke="#2f5678" stroke-width="1.400"/><path d="M5.400 1.800l2.600 5.500h-5.200z" fill="#2f5678"/><path d="M5.400 21.800l9.400-12.800" stroke="#2f5678" stroke-width="1.300"/><path d="M5.400 12.300c2.500-.8 6 .4 7.600 3.100" fill="none" stroke="#5d92cc" stroke-width="1"/><path d="M5.800 13.200v7.200l5-6c-1.300-1.200-3.200-1.600-5-1.200z" fill="#c4c4c4"/><circle cx="19.500" cy="6.300" r="1.900" fill="#fff" stroke="#444" stroke-width="0.900"/></svg>
<svg class="a" style="left:1179px;top:66px;" width="8" height="5" viewBox="0 0 8 5"><path d="M0 0h8l-4 4.5z" fill="#4a4a4a"/></svg>
<svg class="a" style="left:1194px;top:56px;" width="24" height="24" viewBox="0 0 24 24"><path d="M5.500 1.500h13a4 4 0 0 1 4 4v4a4 4 0 0 1-4 4h-5l-5.500 5.500 1.500-5.500h-4a4 4 0 0 1-4-4v-4a4 4 0 0 1 4-4z" fill="#fcee94" stroke="#d3ac14" stroke-width="1.100"/><circle cx="6" cy="19" r="3.400" fill="#7db87c" stroke="#5b7b5a" stroke-width="0.900"/></svg>
<svg class="a" style="left:1227px;top:56px;" width="24" height="24" viewBox="0 0 24 24"><path d="M8.51 0.20 L12.49 0.20 L12.92 2.17 L14.33 2.75 L16.03 1.67 L18.83 4.47 L17.75 6.17 L18.33 7.58 L20.30 8.01 L20.30 11.99 L18.33 12.42 L17.75 13.83 L18.83 15.53 L16.03 18.33 L14.33 17.25 L12.92 17.83 L12.49 19.80 L8.51 19.80 L8.08 17.83 L6.67 17.25 L4.97 18.33 L2.17 15.53 L3.25 13.83 L2.67 12.42 L0.70 11.99 L0.70 8.01 L2.67 7.58 L3.25 6.17 L2.17 4.47 L4.97 1.67 L6.67 2.75 L8.08 2.17z" fill="#f2f2f2" stroke="#d5d5d5" stroke-width="0.900" stroke-linejoin="round"/><circle cx="10.500" cy="10" r="5.600" fill="#dcdfe2" stroke="#d0d3d6"/><path d="M8.700 7l5 3-5 3z" fill="#f8f8f8"/><path d="M13 10.500l11.500 5.500-4.600 1.700 3.700 4.800-2.200 1.700-3.700-4.800-3.200 3.200z" fill="#fdfdfd" stroke="#c8c8c8" stroke-width="0.900"/></svg>
<svg class="a" style="left:1257px;top:66px;" width="8" height="5" viewBox="0 0 8 5"><path d="M0 0h8l-4 4.5z" fill="#a8a8a8"/></svg>
<svg class="a" style="left:6px;top:99px;" width="5" height="18" viewBox="0 0 5 18"><rect x="0.6" y="0.6" width="1" height="1" fill="#fbfbfb"/><rect x="0" y="0" width="1.1" height="1.1" fill="#b2b2b2"/><rect x="3.6" y="0.6" width="1" height="1" fill="#fbfbfb"/><rect x="3" y="0" width="1.1" height="1.1" fill="#b2b2b2"/><rect x="0.6" y="3.6" width="1" height="1" fill="#fbfbfb"/><rect x="0" y="3" width="1.1" height="1.1" fill="#b2b2b2"/><rect x="3.6" y="3.6" width="1" height="1" fill="#fbfbfb"/><rect x="3" y="3" width="1.1" height="1.1" fill="#b2b2b2"/><rect x="0.6" y="6.6" width="1" height="1" fill="#fbfbfb"/><rect x="0" y="6" width="1.1" height="1.1" fill="#b2b2b2"/><rect x="3.6" y="6.6" width="1" height="1" fill="#fbfbfb"/><rect x="3" y="6" width="1.1" height="1.1" fill="#b2b2b2"/><rect x="0.6" y="9.6" width="1" height="1" fill="#fbfbfb"/><rect x="0" y="9" width="1.1" height="1.1" fill="#b2b2b2"/><rect x="3.6" y="9.6" width="1" height="1" fill="#fbfbfb"/><rect x="3" y="9" width="1.1" height="1.1" fill="#b2b2b2"/><rect x="0.6" y="12.6" width="1" height="1" fill="#fbfbfb"/><rect x="0" y="12" width="1.1" height="1.1" fill="#b2b2b2"/><rect x="3.6" y="12.6" width="1" height="1" fill="#fbfbfb"/><rect x="3" y="12" width="1.1" height="1.1" fill="#b2b2b2"/><rect x="0.6" y="15.6" width="1" height="1" fill="#fbfbfb"/><rect x="0" y="15" width="1.1" height="1.1" fill="#b2b2b2"/><rect x="3.6" y="15.6" width="1" height="1" fill="#fbfbfb"/><rect x="3" y="15" width="1.1" height="1.1" fill="#b2b2b2"/></svg>
<svg class="a" style="left:18px;top:95px;" width="24" height="24" viewBox="0 0 24 24"><rect x="2" y="6.500" width="12" height="12" transform="rotate(-18 8 12.500)" fill="#dc6a3c" stroke="#b8532b" stroke-width="0.600"/><rect x="5.500" y="3.500" width="12" height="12" transform="rotate(-6 11.500 9.500)" fill="#f5c33b" stroke="#d1a220" stroke-width="0.600"/><rect x="10" y="1.500" width="13" height="13" transform="rotate(10 16.500 8)" fill="#6c99cc" stroke="#4c78aa" stroke-width="0.700"/><rect x="15" y="15" width="9" height="9" rx="1.600" fill="#5a9e5f"/><path d="M19.500 16.500v6M16.500 19.500h6" stroke="#fff" stroke-width="1.700"/></svg>
<svg class="a" style="left:51px;top:95px;" width="24" height="24" viewBox="0 0 24 24"><ellipse cx="12.500" cy="8" rx="7.800" ry="7.300" fill="#9dbde3" stroke="#3d6aa0" stroke-width="0.700"/><path d="M7 5c1-1.500 2.500-2 3-1s-1 1.500-.500 2.500-1 1.500-1.500 2.500-1.200-.500-1.500-1.500 0-2 .500-2.500zM12 2.500c1.500-.500 3 0 3.500 1s-.500 1-1 .800-1 1-.500 1.800 1.500.500 2 1.200.500 2-.500 2-1.500-1-2-1.800-1-1-1.500-2-.500-2.500 0-3zM16.500 7c.800-.300 1.800.500 1.800 1.300s-1 .800-1.500.300-.800-1.300-.300-1.600z" fill="#33609c"/><path d="M0.500 7.200l11.500 6.200v10.100l-11.500-6.800z" fill="#ddb000" stroke="#5e4a00" stroke-width="0.800" stroke-linejoin="round"/><path d="M12 13.400l11.500-6.200v9.800l-11.500 6.500z" fill="#fdf770" stroke="#5e4a00" stroke-width="0.800" stroke-linejoin="round"/><path d="M0.500 7.200l3.500-1.800M23.500 7.200l-3.500-1.800" stroke="#5e4a00" stroke-width="0.800"/><rect x="15" y="15" width="9" height="9" rx="1.6" fill="#c4a000"/><path d="M19.5 16.2V22.8M16.2 19.5H22.8M17 17L22 22M22 17L17 22" stroke="#fff" stroke-width="1.35" fill="none"/><circle cx="19.5" cy="19.5" r="0.9" fill="#fff"/></svg>
<svg class="a" style="left:84px;top:95px;" width="24" height="24" viewBox="0 0 24 24"><path d="M2.800 2.800l6.200 14.500 5.900-14.500h6.300" fill="none" stroke="#27455c" stroke-width="1.300"/><g fill="#fff" stroke="#27455c" stroke-width="0.900"><path d="M2.800 0.800l2 2-2 2-2-2zM15 0.800l2 2-2 2-2-2zM21.200 0.800l2 2-2 2-2-2z"/><circle cx="9" cy="17.500" r="1.700"/></g><rect x="15" y="15" width="9" height="9" rx="1.6" fill="#c4a000"/><path d="M19.5 16.2V22.8M16.2 19.5H22.8M17 17L22 22M22 17L17 22" stroke="#fff" stroke-width="1.35" fill="none"/><circle cx="19.5" cy="19.5" r="0.9" fill="#fff"/></svg>
<svg class="a" style="left:117px;top:95px;" width="24" height="24" viewBox="0 0 24 24"><path d="M23 1C14 2.500 6.500 9 3 20c4-1 7-2.500 9.500-4.500l-1-.5c3-1.500 5-3.500 6.500-5.500l-1.500-.3C19.500 6.500 22 4 23 1z" fill="#8fb1d9" stroke="#3e6a9c" stroke-width="0.700"/><path d="M22 2C13 7 6 15 1 23.500" fill="none" stroke="#3e6a9c" stroke-width="1"/><rect x="15" y="15" width="9" height="9" rx="1.6" fill="#c4a000"/><path d="M19.5 16.2V22.8M16.2 19.5H22.8M17 17L22 22M22 17L17 22" stroke="#fff" stroke-width="1.35" fill="none"/><circle cx="19.5" cy="19.5" r="0.9" fill="#fff"/></svg>
<svg class="a" style="left:151px;top:95px;" width="24" height="24" viewBox="0 0 24 24"><path d="M5 1.500v5M8 1.500v5M11 1.500v5M14 1.500v5M17 1.500v5M5 16v5M8 16v5M11 16v5M14 16v5" stroke="#27496d" stroke-width="1.100"/><rect x="2" y="6" width="18.500" height="10.500" rx="1.800" fill="#6b97cb" stroke="#3c6ba2" stroke-width="0.900"/><rect x="14" y="15" width="9" height="9" rx="1.6" fill="#c4a000"/><path d="M18.5 16.2V22.8M15.2 19.5H21.8M16 17L21 22M21 17L16 22" stroke="#fff" stroke-width="1.35" fill="none"/><circle cx="18.5" cy="19.5" r="0.9" fill="#fff"/></svg>
<svg class="a" style="left:183px;top:95px;" width="24" height="24" viewBox="0 0 24 24"><rect x="1" y="1" width="22" height="21.500" fill="#84a9d4" stroke="#27496d" stroke-width="1.200"/><path d="M1 10.500h22M13.500 1v9.500M1 16.500h11M7 10.500v12M12.500 10.500v12" stroke="#27496d" stroke-width="1.200" fill="none"/><path d="M1 1l12.500 9.500M13.500 1L1 10.500M23 1l-9.500 9.500" stroke="#27496d" stroke-width="0.700" fill="none"/><path d="M13.500 10.500L23 1v9.500z" fill="#5c86b8"/><rect x="15" y="15" width="9" height="9" rx="1.6" fill="#c4a000"/><path d="M19.5 16.2V22.8M16.2 19.5H22.8M17 17L22 22M22 17L17 22" stroke="#fff" stroke-width="1.35" fill="none"/><circle cx="19.5" cy="19.5" r="0.9" fill="#fff"/></svg>
<svg class="a" style="left:216px;top:95px;" width="24" height="24" viewBox="0 0 24 24"><rect x="1" y="0.800" width="22" height="22.200" rx="2.500" fill="#a9c4e2" stroke="#5b86b5" stroke-width="1"/><path d="M2.500 2.800l6.200 14.500 6.300-14.500h6.300" fill="none" stroke="#27455c" stroke-width="1.200"/><g fill="#fff" stroke="#27455c" stroke-width="0.900"><circle cx="2.800" cy="2.500" r="1.500"/><circle cx="15.200" cy="2.500" r="1.500"/><circle cx="21.300" cy="2.500" r="1.500"/><circle cx="8.800" cy="17.500" r="1.800"/></g><rect x="15" y="15" width="9" height="9" rx="1.6" fill="#c4a000"/><path d="M19.5 16.2V22.8M16.2 19.5H22.8M17 17L22 22M22 17L17 22" stroke="#fff" stroke-width="1.35" fill="none"/><circle cx="19.5" cy="19.5" r="0.9" fill="#fff"/></svg>
<svg class="a" style="left:253px;top:99px;" width="5" height="18" viewBox="0 0 5 18"><rect x="0.6" y="0.6" width="1" height="1" fill="#fbfbfb"/><rect x="0" y="0" width="1.1" height="1.1" fill="#b2b2b2"/><rect x="3.6" y="0.6" width="1" height="1" fill="#fbfbfb"/><rect x="3" y="0" width="1.1" height="1.1" fill="#b2b2b2"/><rect x="0.6" y="3.6" width="1" height="1" fill="#fbfbfb"/><rect x="0" y="3" width="1.1" height="1.1" fill="#b2b2b2"/><rect x="3.6" y="3.6" width="1" height="1" fill="#fbfbfb"/><rect x="3" y="3" width="1.1" height="1.1" fill="#b2b2b2"/><rect x="0.6" y="6.6" width="1" height="1" fill="#fbfbfb"/><rect x="0" y="6" width="1.1" height="1.1" fill="#b2b2b2"/><rect x="3.6" y="6.6" width="1" height="1" fill="#fbfbfb"/><rect x="3" y="6" width="1.1" height="1.1" fill="#b2b2b2"/><rect x="0.6" y="9.6" width="1" height="1" fill="#fbfbfb"/><rect x="0" y="9" width="1.1" height="1.1" fill="#b2b2b2"/><rect x="3.6" y="9.6" width="1" height="1" fill="#fbfbfb"/><rect x="3" y="9" width="1.1" height="1.1" fill="#b2b2b2"/><rect x="0.6" y="12.6" width="1" height="1" fill="#fbfbfb"/><rect x="0" y="12" width="1.1" height="1.1" fill="#b2b2b2"/><rect x="3.6" y="12.6" width="1" height="1" fill="#fbfbfb"/><rect x="3" y="12" width="1.1" height="1.1" fill="#b2b2b2"/><rect x="0.6" y="15.6" width="1" height="1" fill="#fbfbfb"/><rect x="0" y="15" width="1.1" height="1.1" fill="#b2b2b2"/><rect x="3.6" y="15.6" width="1" height="1" fill="#fbfbfb"/><rect x="3" y="15" width="1.1" height="1.1" fill="#b2b2b2"/></svg>
<svg class="a" style="left:265px;top:95px;" width="24" height="24" viewBox="0 0 24 24"><g transform="translate(-2.5,0)"><path d="M15 1l4.500 2.300-9.500 16-5 3.200.5-5.500z" fill="#e4e2dc" stroke="#d2d0ca" stroke-width="0.700"/><path d="M5.500 17l4.500 2.300M14 2.800l4.500 2.300" stroke="#d2d0ca" stroke-width="0.700" fill="none"/></g><g transform="translate(3,0)"><path d="M15 1l4.500 2.300-9.500 16-5 3.200.5-5.500z" fill="#e4e2dc" stroke="#d2d0ca" stroke-width="0.700"/><path d="M5.500 17l4.500 2.300M14 2.800l4.500 2.300" stroke="#d2d0ca" stroke-width="0.700" fill="none"/></g></svg>
<svg class="a" style="left:285px;top:116px;" width="6" height="4" viewBox="0 0 6 4"><path d="M0 0h6l-3 3.500z" fill="#b8b8b8"/></svg>
<svg class="a" style="left:298px;top:95px;" width="24" height="24" viewBox="0 0 24 24"><g transform="translate(0.5,0.5)"><path d="M15 1l4.500 2.300-9.500 16-5 3.200.5-5.500z" fill="#e4e2dc" stroke="#d2d0ca" stroke-width="0.700"/><path d="M5.500 17l4.500 2.300M14 2.800l4.500 2.300" stroke="#d2d0ca" stroke-width="0.700" fill="none"/></g></svg>
<svg class="a" style="left:331px;top:95px;" width="24" height="24" viewBox="0 0 24 24"><rect x="1" y="1" width="19.500" height="19.500" rx="2.300" fill="#d9dade" stroke="#cfd0d4"/><rect x="4.500" y="2" width="12.500" height="7.500" fill="#efefef"/><path d="M6 4h9.500M6 6h9.500M6 8h9.500" stroke="#dcdcdc" stroke-width="0.800"/><rect x="5" y="13" width="11" height="7" fill="#ededed"/><rect x="6.500" y="14.500" width="2.500" height="4.500" fill="#d0d2d8"/><g transform="translate(8.500,8.500) scale(0.680)"><g transform="translate(0,0)"><path d="M15 1l4.500 2.300-9.500 16-5 3.200.5-5.500z" fill="#e0ddd6" stroke="#cdcac2" stroke-width="0.700"/><path d="M5.500 17l4.500 2.300M14 2.800l4.500 2.300" stroke="#cdcac2" stroke-width="0.700" fill="none"/></g></g></svg>
<svg class="a" style="left:364px;top:95px;" width="24" height="24" viewBox="0 0 24 24"><path d="M4.500 19.500l15-15.500" stroke="#d2d2d2" stroke-width="1" stroke-dasharray="2.500 1.800"/><rect x="18.500" y="2.500" width="3" height="3" fill="#f6f6f6" stroke="#c8c8c8" stroke-width="0.900"/><rect x="2.300" y="18.500" width="3" height="3" fill="#f6f6f6" stroke="#c8c8c8" stroke-width="0.900"/></svg>
<svg class="a" style="left:394px;top:105px;" width="8" height="5" viewBox="0 0 8 5"><path d="M0 0h8l-4 4.5z" fill="#9c9c9c"/></svg>
<svg class="a" style="left:409px;top:95px;" width="24" height="24" viewBox="0 0 24 24"><g fill="#e2e2e2" stroke="#cfcfcf" stroke-width="0.800"><circle cx="11" cy="3.500" r="2.600"/><circle cx="20" cy="5.500" r="2.600"/><circle cx="4" cy="11.500" r="2.600"/></g><rect x="13.3" y="12.5" width="10.5" height="10.5" rx="1.6" fill="#c8c3b6"/><path d="M18.55 13.7V21.8M14.5 17.75H22.6M15.3 14.5L21.8 21.0M21.8 14.5L15.3 21.0" stroke="#fff" stroke-width="1.35" fill="none"/><circle cx="18.55" cy="17.75" r="0.9" fill="#fff"/></svg>
<svg class="a" style="left:443px;top:95px;" width="24" height="24" viewBox="0 0 24 24"><rect x="1.500" y="3" width="5" height="5" fill="#f4f4f4" stroke="#bdbdbd" stroke-width="0.900"/><circle cx="4" cy="5.500" r="1.400" fill="none" stroke="#bdbdbd" stroke-width="0.800"/><path d="M6.500 5.500h10M3.500 8l-3 13" stroke="#cfcfcf" stroke-width="0.900" fill="none"/><path d="M8 21.500l11.500-12.500" stroke="#d8d6cc" stroke-width="3.200"/><path d="M9 11l11 10.500" stroke="#d8d6cc" stroke-width="3.200"/><path d="M7 12.500l3.500-4 4 1-3.500 4.500z" fill="#cfcfcf"/><path d="M18 8l3-2.500" stroke="#cfcfcf" stroke-width="1.600"/></svg>
<svg class="a" style="left:472px;top:105px;" width="8" height="5" viewBox="0 0 8 5"><path d="M0 0h8l-4 4.5z" fill="#9c9c9c"/></svg>
<svg class="a" style="left:487px;top:95px;" width="24" height="24" viewBox="0 0 24 24"><rect x="2" y="2.500" width="19.500" height="5" fill="#dddbd3" stroke="#cfcdc6" stroke-width="0.700"/><rect x="2" y="9.500" width="19.500" height="5" fill="#dddbd3" stroke="#cfcdc6" stroke-width="0.700"/><rect x="2" y="16.500" width="19.500" height="5" fill="#dddbd3" stroke="#cfcdc6" stroke-width="0.700"/><g transform="translate(3.500,0.500)"><g transform="translate(0,0)"><path d="M15 1l4.500 2.300-9.500 16-5 3.200.5-5.500z" fill="#ebe7e4" stroke="#d4cfcb" stroke-width="0.700"/><path d="M5.500 17l4.500 2.300M14 2.800l4.500 2.300" stroke="#d4cfcb" stroke-width="0.700" fill="none"/></g></g></svg>
<svg class="a" style="left:520px;top:95px;" width="24" height="24" viewBox="0 0 24 24"><rect x="2" y="2" width="13" height="13" fill="#dddbd3" stroke="#cfcdc6" stroke-width="0.700"/><path d="M4.500 4.500h15.500v2h-15.500z" fill="#dcc9c9"/><path d="M5.500 8h13.500l-1.200 14.500h-11.100z" fill="#efe6e6" stroke="#d6c2c2" stroke-width="1.100"/><path d="M9.200 9.500v11.500M12.300 9.500v11.500M15.400 9.500v11.500" stroke="#d9c6c6" stroke-width="1.300"/></svg>
<svg class="a" style="left:553px;top:95px;" width="24" height="24" viewBox="0 0 24 24"><path d="M1.500 4.500l14 8M1.500 12.500l13.500-3.500" stroke="#d4d4d4" stroke-width="1.600" fill="none"/><path d="M1.500 11.500l9-1.200-1 2.200z" fill="#e0e0e0"/><ellipse cx="19" cy="7.200" rx="3.300" ry="2.200" transform="rotate(-30 19 7.200)" fill="none" stroke="#d9c9c9" stroke-width="1.500"/><ellipse cx="18.500" cy="15.500" rx="3.300" ry="2.200" transform="rotate(40 18.500 15.500)" fill="none" stroke="#d9c9c9" stroke-width="1.500"/></svg>
<svg class="a" style="left:586px;top:95px;" width="24" height="24" viewBox="0 0 24 24"><path d="M7.500 1.500h7l4 4v12.500h-11z" fill="#f8f8f8" stroke="#dedede" stroke-width="0.900"/><path d="M2.500 6.500h7.500l4 4v11h-11.500z" fill="#fafafa" stroke="#cfcfcf" stroke-width="1"/><path d="M10 6.500v4h4" fill="none" stroke="#cfcfcf"/><path d="M4.500 12.500h7.500M4.500 14.500h7.500M4.500 16.500h6M4.500 18.500h7.500" stroke="#d9d9d9" stroke-width="0.900"/></svg>
<svg class="a" style="left:619px;top:95px;" width="24" height="24" viewBox="0 0 24 24"><rect x="4.500" y="2.500" width="15" height="19" fill="#ececec" stroke="#d3cdc8" stroke-width="1"/><rect x="8" y="1" width="8" height="3.500" rx="0.800" fill="#dcdcdc"/><path d="M6.500 5.500h7.500l3.500 3.500v11h-11z" fill="#fafafa" stroke="#d2d2d2" stroke-width="0.900"/><path d="M8.500 10.500h7M8.500 12.500h7M8.500 14.500h5.500M8.500 16.500h7" stroke="#dadada" stroke-width="0.900"/></svg>
<svg class="a" style="left:652px;top:95px;" width="24" height="24" viewBox="0 0 24 24"><path d="M3 10.700L9.800 2.700V7.800H14.500C18.500 7.800 21 10.500 21 14C21 17.500 18 20.800 12.200 21L12 18.200C14.500 17.800 15.800 16.500 15.800 15C15.800 13.600 14.800 13 13.500 13H9.800V18.900z" fill="#ddd8d5"/></svg>
<svg class="a" style="left:685px;top:95px;" width="24" height="24" viewBox="0 0 24 24"><path d="M3 10.700L9.800 2.700V7.800H14.500C18.500 7.800 21 10.500 21 14C21 17.500 18 20.800 12.200 21L12 18.200C14.500 17.800 15.800 16.500 15.800 15C15.800 13.600 14.800 13 13.500 13H9.800V18.900z" fill="#d8dbd8" transform="translate(24,0) scale(-1,1)"/></svg>
<svg class="a" style="left:722px;top:99px;" width="5" height="18" viewBox="0 0 5 18"><rect x="0.6" y="0.6" width="1" height="1" fill="#fbfbfb"/><rect x="0" y="0" width="1.1" height="1.1" fill="#b2b2b2"/><rect x="3.6" y="0.6" width="1" height="1" fill="#fbfbfb"/><rect x="3" y="0" width="1.1" height="1.1" fill="#b2b2b2"/><rect x="0.6" y="3.6" width="1" height="1" fill="#fbfbfb"/><rect x="0" y="3" width="1.1" height="1.1" fill="#b2b2b2"/><rect x="3.6" y="3.6" width="1" height="1" fill="#fbfbfb"/><rect x="3" y="3" width="1.1" height="1.1" fill="#b2b2b2"/><rect x="0.6" y="6.6" width="1" height="1" fill="#fbfbfb"/><rect x="0" y="6" width="1.1" height="1.1" fill="#b2b2b2"/><rect x="3.6" y="6.6" width="1" height="1" fill="#fbfbfb"/><rect x="3" y="6" width="1.1" height="1.1" fill="#b2b2b2"/><rect x="0.6" y="9.6" width="1" height="1" fill="#fbfbfb"/><rect x="0" y="9" width="1.1" height="1.1" fill="#b2b2b2"/><rect x="3.6" y="9.6" width="1" height="1" fill="#fbfbfb"/><rect x="3" y="9" width="1.1" height="1.1" fill="#b2b2b2"/><rect x="0.6" y="12.6" width="1" height="1" fill="#fbfbfb"/><rect x="0" y="12" width="1.1" height="1.1" fill="#b2b2b2"/><rect x="3.6" y="12.6" width="1" height="1" fill="#fbfbfb"/><rect x="3" y="12" width="1.1" height="1.1" fill="#b2b2b2"/><rect x="0.6" y="15.6" width="1" height="1" fill="#fbfbfb"/><rect x="0" y="15" width="1.1" height="1.1" fill="#b2b2b2"/><rect x="3.6" y="15.6" width="1" height="1" fill="#fbfbfb"/><rect x="3" y="15" width="1.1" height="1.1" fill="#b2b2b2"/></svg>
<svg class="a" style="left:733px;top:95px;" width="24" height="24" viewBox="0 0 24 24"><path d="M5.2 4.0H21.5V14.0H5.2L1.5 9.0z" fill="#e2e0d7" stroke="#cfcdc3" stroke-width="1"/><text x="6.4" y="11.9" font-family="Liberation Sans,sans-serif" font-size="9" font-weight="bold" fill="#bdbdbd" textLength="13.5" lengthAdjust="spacingAndGlyphs">abc</text></svg>
<svg class="a" style="left:766px;top:95px;" width="24" height="24" viewBox="0 0 24 24"><circle cx="9.500" cy="8.500" r="7" fill="#d3dcd9"/><path d="M9.500 8.500V1.500A7 7 0 0 1 15.600 12z" fill="#e2d8da"/><path d="M9.500 8.500V1.500A7 7 0 0 0 3.400 12z" fill="#dedbd0"/><rect x="10.500" y="15.500" width="4" height="7" fill="#dedbd0"/><rect x="14.500" y="9.500" width="3.500" height="13" fill="#d3dcd9"/><rect x="18" y="17" width="3.500" height="5.500" fill="#e2d8da"/></svg>
<div class="a" style="left:799px;top:98px;width:1px;height:19px;background:#c6c6c6;"></div>
<svg class="a" style="left:806px;top:95px;" width="24" height="24" viewBox="0 0 24 24"><path d="M5.2 4.0H21.5V14.0H5.2L1.5 9.0z" fill="#cfe2fb" stroke="#4a90e2" stroke-width="1"/><text x="6.4" y="11.9" font-family="Liberation Sans,sans-serif" font-size="9" font-weight="bold" fill="#16222e" textLength="9" lengthAdjust="spacingAndGlyphs">ab</text><path d="M16.500 6.500l1.800 6.500h-1.800z" fill="#f4f4f4" stroke="#999" stroke-width="0.500"/><circle cx="19.800" cy="18" r="4.600" fill="#a0201e"/><circle cx="18.600" cy="16.600" r="1.600" fill="#c24a44"/></svg>
<svg class="a" style="left:839px;top:95px;" width="24" height="24" viewBox="0 0 24 24"><path d="M5.2 4.0H21.5V14.0H5.2L1.5 9.0z" fill="#ffe9e9" stroke="#ff0a0a" stroke-width="1"/><text x="6.4" y="11.9" font-family="Liberation Sans,sans-serif" font-size="9" font-weight="bold" fill="#f01414" textLength="13.5" lengthAdjust="spacingAndGlyphs">abc</text></svg>
<div class="a" style="left:872px;top:98px;width:1px;height:19px;background:#c6c6c6;"></div>
<svg class="a" style="left:879px;top:95px;" width="24" height="24" viewBox="0 0 24 24"><path d="M5.2 4.0H21.5V14.0H5.2L1.5 9.0z" fill="#e2e0d7" stroke="#cfcdc3" stroke-width="1"/><text x="6.4" y="11.9" font-family="Liberation Sans,sans-serif" font-size="9" font-weight="bold" fill="#bdbdbd" textLength="9" lengthAdjust="spacingAndGlyphs">ab</text><path d="M16.500 6.500l1.800 6.500h-1.800z" fill="#f6f6f6" stroke="#d0d0d0" stroke-width="0.500"/><circle cx="18.800" cy="18" r="4.600" fill="#d5cbcc"/></svg>
<svg class="a" style="left:912px;top:95px;" width="24" height="24" viewBox="0 0 24 24"><path d="M5.2 4.0H21.5V14.0H5.2L1.5 9.0z" fill="#e2e0d7" stroke="#cfcdc3" stroke-width="1"/><text x="6.4" y="11.9" font-family="Liberation Sans,sans-serif" font-size="9" font-weight="bold" fill="#bdbdbd" textLength="13.5" lengthAdjust="spacingAndGlyphs">abc</text><path d="M8.500 18.500c3.500-5.500 11-5.500 15.500 0-4.500 5-12 5-15.500 0z" fill="#fbfbfb" stroke="#c4c4c4" stroke-width="0.900"/><path d="M9 16c3.500-3.500 10-3.800 14.500-.500" fill="none" stroke="#cdcdcd" stroke-width="0.700"/><circle cx="16" cy="18.500" r="2.900" fill="#c9cfdb"/><circle cx="16" cy="18.500" r="1.200" fill="#9c9c9c"/></svg>
<svg class="a" style="left:946px;top:95px;" width="24" height="24" viewBox="0 0 24 24"><path d="M5.2 4.0H21.5V14.0H5.2L1.5 9.0z" fill="#e2e0d7" stroke="#cfcdc3" stroke-width="1"/><text x="6.4" y="11.9" font-family="Liberation Sans,sans-serif" font-size="9" font-weight="bold" fill="#bdbdbd" textLength="13.5" lengthAdjust="spacingAndGlyphs">abc</text><rect x="13" y="13" width="11" height="11" rx="1.600" fill="#cdd0d3"/><path d="M14.500 17h4.500v-2.500l4 4-4 4v-2.500h-4.500z" fill="#f8f8f8"/></svg>
<svg class="a" style="left:979px;top:95px;" width="24" height="24" viewBox="0 0 24 24"><path d="M5.2 4.0H21.5V14.0H5.2L1.5 9.0z" fill="#e2e0d7" stroke="#cfcdc3" stroke-width="1"/><text x="6.4" y="11.9" font-family="Liberation Sans,sans-serif" font-size="9" font-weight="bold" fill="#bdbdbd" textLength="13.5" lengthAdjust="spacingAndGlyphs">abc</text><rect x="13" y="13" width="11" height="11" rx="1.600" fill="#cdd0d3"/><path d="M21.500 19.500a3.300 3.300 0 1 0-3 2.800" fill="none" stroke="#f8f8f8" stroke-width="1.700"/><path d="M16.500 18.500h4v4z" fill="#f8f8f8"/></svg>
<svg class="a" style="left:1012px;top:95px;" width="24" height="24" viewBox="0 0 24 24"><path d="M5.2 4.0H21.5V14.0H5.2L1.5 9.0z" fill="#e2e0d7" stroke="#cfcdc3" stroke-width="1"/><text x="6.4" y="11.9" font-family="Liberation Sans,sans-serif" font-size="9" font-weight="bold" fill="#bdbdbd" textLength="13.5" lengthAdjust="spacingAndGlyphs">abc</text><rect x="13" y="13" width="11" height="11" rx="1.600" fill="#d6d4cc"/><path d="M22 14.500l1 1-5.500 6-2.500 1.200 1.200-2.500z" fill="#f8f8f8"/></svg>
<svg class="a" style="left:1049px;top:99px;" width="5" height="18" viewBox="0 0 5 18"><rect x="0.6" y="0.6" width="1" height="1" fill="#fbfbfb"/><rect x="0" y="0" width="1.1" height="1.1" fill="#b2b2b2"/><rect x="3.6" y="0.6" width="1" height="1" fill="#fbfbfb"/><rect x="3" y="0" width="1.1" height="1.1" fill="#b2b2b2"/><rect x="0.6" y="3.6" width="1" height="1" fill="#fbfbfb"/><rect x="0" y="3" width="1.1" height="1.1" fill="#b2b2b2"/><rect x="3.6" y="3.6" width="1" height="1" fill="#fbfbfb"/><rect x="3" y="3" width="1.1" height="1.1" fill="#b2b2b2"/><rect x="0.6" y="6.6" width="1" height="1" fill="#fbfbfb"/><rect x="0" y="6" width="1.1" height="1.1" fill="#b2b2b2"/><rect x="3.6" y="6.6" width="1" height="1" fill="#fbfbfb"/><rect x="3" y="6" width="1.1" height="1.1" fill="#b2b2b2"/><rect x="0.6" y="9.6" width="1" height="1" fill="#fbfbfb"/><rect x="0" y="9" width="1.1" height="1.1" fill="#b2b2b2"/><rect x="3.6" y="9.6" width="1" height="1" fill="#fbfbfb"/><rect x="3" y="9" width="1.1" height="1.1" fill="#b2b2b2"/><rect x="0.6" y="12.6" width="1" height="1" fill="#fbfbfb"/><rect x="0" y="12" width="1.1" height="1.1" fill="#b2b2b2"/><rect x="3.6" y="12.6" width="1" height="1" fill="#fbfbfb"/><rect x="3" y="12" width="1.1" height="1.1" fill="#b2b2b2"/><rect x="0.6" y="15.6" width="1" height="1" fill="#fbfbfb"/><rect x="0" y="15" width="1.1" height="1.1" fill="#b2b2b2"/><rect x="3.6" y="15.6" width="1" height="1" fill="#fbfbfb"/><rect x="3" y="15" width="1.1" height="1.1" fill="#b2b2b2"/></svg>
<svg class="a" style="left:1061px;top:95px;" width="24" height="24" viewBox="0 0 24 24"><circle cx="12" cy="10" r="11.300" fill="#5b87c0" stroke="#274e86" stroke-width="1"/><path d="M12 -1.300v22.600M0.700 10h22.600M2.500 4h19M2.500 16h19M12-1.300c-6 3-6 19.600 0 22.600M12-1.300c6 3 6 19.600 0 22.600" fill="none" stroke="#dfe9f6" stroke-width="0.800"/><path d="M4 2.500c2.500-1 5 0 5.500 2s-2 1.500-2.500 3.500-3.500 1-3.500-1 0-3.500.500-4.500zM13.500 3c3-.5 6 1 6.500 3.500s-2.500 1-3 3-3 0-3-2-1-3.500-.500-4.500z" fill="#1f4478" opacity="0.850"/><path d="M7.500 12.500l3.300 0 1.200 2 1.200-2 3.300 0 4.500 8a3.300 3.300 0 0 1-6.300 1.500l-.7-3.500h-4l-.7 3.500a3.300 3.300 0 0 1-6.300-1.500z" fill="#050505"/><ellipse cx="6.500" cy="20.800" rx="2.600" ry="1.600" fill="#fff"/><ellipse cx="17.500" cy="20.800" rx="2.600" ry="1.600" fill="#fff"/></svg>
<svg class="a" style="left:1098px;top:99px;" width="5" height="18" viewBox="0 0 5 18"><rect x="0.6" y="0.6" width="1" height="1" fill="#fbfbfb"/><rect x="0" y="0" width="1.1" height="1.1" fill="#b2b2b2"/><rect x="3.6" y="0.6" width="1" height="1" fill="#fbfbfb"/><rect x="3" y="0" width="1.1" height="1.1" fill="#b2b2b2"/><rect x="0.6" y="3.6" width="1" height="1" fill="#fbfbfb"/><rect x="0" y="3" width="1.1" height="1.1" fill="#b2b2b2"/><rect x="3.6" y="3.6" width="1" height="1" fill="#fbfbfb"/><rect x="3" y="3" width="1.1" height="1.1" fill="#b2b2b2"/><rect x="0.6" y="6.6" width="1" height="1" fill="#fbfbfb"/><rect x="0" y="6" width="1.1" height="1.1" fill="#b2b2b2"/><rect x="3.6" y="6.6" width="1" height="1" fill="#fbfbfb"/><rect x="3" y="6" width="1.1" height="1.1" fill="#b2b2b2"/><rect x="0.6" y="9.6" width="1" height="1" fill="#fbfbfb"/><rect x="0" y="9" width="1.1" height="1.1" fill="#b2b2b2"/><rect x="3.6" y="9.6" width="1" height="1" fill="#fbfbfb"/><rect x="3" y="9" width="1.1" height="1.1" fill="#b2b2b2"/><rect x="0.6" y="12.6" width="1" height="1" fill="#fbfbfb"/><rect x="0" y="12" width="1.1" height="1.1" fill="#b2b2b2"/><rect x="3.6" y="12.6" width="1" height="1" fill="#fbfbfb"/><rect x="3" y="12" width="1.1" height="1.1" fill="#b2b2b2"/><rect x="0.6" y="15.6" width="1" height="1" fill="#fbfbfb"/><rect x="0" y="15" width="1.1" height="1.1" fill="#b2b2b2"/><rect x="3.6" y="15.6" width="1" height="1" fill="#fbfbfb"/><rect x="3" y="15" width="1.1" height="1.1" fill="#b2b2b2"/></svg>
<svg class="a" style="left:1110px;top:95px;" width="24" height="24" viewBox="0 0 24 24"><path d="M11.500 1.500c-5 0-5.500 2-5.500 3.500v3h6v1H4c-2.500 0-3.500 2.500-3.500 5s1 5 3.500 5h2.500v-3.500c0-2 1.500-3.500 3.500-3.500h5c1.800 0 3-1.300 3-3V5c0-2-1.500-3.500-6.500-3.500z" fill="#3872a5"/><circle cx="8.500" cy="4.500" r="1.100" fill="#fff"/><path d="M12.500 22.500c5 0 5.500-2 5.500-3.500v-3h-6v-1h8c2.500 0 3.500-2.500 3.500-5s-1-5-3.500-5h-2.500v3.500c0 2-1.500 3.500-3.500 3.500h-5c-1.800 0-3 1.300-3 3v3c0 2 1.500 4.500 6.500 4.500z" fill="#fbd043" transform="translate(0,-1)"/><circle cx="15.500" cy="18.600" r="1.100" fill="#fff"/><path d="M16.500 15.500l6 3-6 3" fill="none" stroke="#222" stroke-width="1.200"/></svg>
<svg class="a" style="left:1147px;top:99px;" width="5" height="18" viewBox="0 0 5 18"><rect x="0.6" y="0.6" width="1" height="1" fill="#fbfbfb"/><rect x="0" y="0" width="1.1" height="1.1" fill="#b2b2b2"/><rect x="3.6" y="0.6" width="1" height="1" fill="#fbfbfb"/><rect x="3" y="0" width="1.1" height="1.1" fill="#b2b2b2"/><rect x="0.6" y="3.6" width="1" height="1" fill="#fbfbfb"/><rect x="0" y="3" width="1.1" height="1.1" fill="#b2b2b2"/><rect x="3.6" y="3.6" width="1" height="1" fill="#fbfbfb"/><rect x="3" y="3" width="1.1" height="1.1" fill="#b2b2b2"/><rect x="0.6" y="6.6" width="1" height="1" fill="#fbfbfb"/><rect x="0" y="6" width="1.1" height="1.1" fill="#b2b2b2"/><rect x="3.6" y="6.6" width="1" height="1" fill="#fbfbfb"/><rect x="3" y="6" width="1.1" height="1.1" fill="#b2b2b2"/><rect x="0.6" y="9.6" width="1" height="1" fill="#fbfbfb"/><rect x="0" y="9" width="1.1" height="1.1" fill="#b2b2b2"/><rect x="3.6" y="9.6" width="1" height="1" fill="#fbfbfb"/><rect x="3" y="9" width="1.1" height="1.1" fill="#b2b2b2"/><rect x="0.6" y="12.6" width="1" height="1" fill="#fbfbfb"/><rect x="0" y="12" width="1.1" height="1.1" fill="#b2b2b2"/><rect x="3.6" y="12.6" width="1" height="1" fill="#fbfbfb"/><rect x="3" y="12" width="1.1" height="1.1" fill="#b2b2b2"/><rect x="0.6" y="15.6" width="1" height="1" fill="#fbfbfb"/><rect x="0" y="15" width="1.1" height="1.1" fill="#b2b2b2"/><rect x="3.6" y="15.6" width="1" height="1" fill="#fbfbfb"/><rect x="3" y="15" width="1.1" height="1.1" fill="#b2b2b2"/></svg>
<svg class="a" style="left:1159px;top:95px;" width="24" height="24" viewBox="0 0 24 24"><rect x="2" y="0.800" width="20" height="21.500" rx="0.800" fill="#6b97c9" stroke="#22303f" stroke-width="1"/><rect x="2" y="0.800" width="5" height="21.500" fill="#2b3a4b"/><text x="10.300" y="17" font-family="Liberation Serif,serif" font-size="15.500" fill="#fff">?</text></svg>
<svg class="a" style="left:1196px;top:99px;" width="5" height="18" viewBox="0 0 5 18"><rect x="0.6" y="0.6" width="1" height="1" fill="#fbfbfb"/><rect x="0" y="0" width="1.1" height="1.1" fill="#b2b2b2"/><rect x="3.6" y="0.6" width="1" height="1" fill="#fbfbfb"/><rect x="3" y="0" width="1.1" height="1.1" fill="#b2b2b2"/><rect x="0.6" y="3.6" width="1" height="1" fill="#fbfbfb"/><rect x="0" y="3" width="1.1" height="1.1" fill="#b2b2b2"/><rect x="3.6" y="3.6" width="1" height="1" fill="#fbfbfb"/><rect x="3" y="3" width="1.1" height="1.1" fill="#b2b2b2"/><rect x="0.6" y="6.6" width="1" height="1" fill="#fbfbfb"/><rect x="0" y="6" width="1.1" height="1.1" fill="#b2b2b2"/><rect x="3.6" y="6.6" width="1" height="1" fill="#fbfbfb"/><rect x="3" y="6" width="1.1" height="1.1" fill="#b2b2b2"/><rect x="0.6" y="9.6" width="1" height="1" fill="#fbfbfb"/><rect x="0" y="9" width="1.1" height="1.1" fill="#b2b2b2"/><rect x="3.6" y="9.6" width="1" height="1" fill="#fbfbfb"/><rect x="3" y="9" width="1.1" height="1.1" fill="#b2b2b2"/><rect x="0.6" y="12.6" width="1" height="1" fill="#fbfbfb"/><rect x="0" y="12" width="1.1" height="1.1" fill="#b2b2b2"/><rect x="3.6" y="12.6" width="1" height="1" fill="#fbfbfb"/><rect x="3" y="12" width="1.1" height="1.1" fill="#b2b2b2"/><rect x="0.6" y="15.6" width="1" height="1" fill="#fbfbfb"/><rect x="0" y="15" width="1.1" height="1.1" fill="#b2b2b2"/><rect x="3.6" y="15.6" width="1" height="1" fill="#fbfbfb"/><rect x="3" y="15" width="1.1" height="1.1" fill="#b2b2b2"/></svg>
<div class="t" style="left:4px;top:129.19px;font-size:11px;line-height:16px;color:#000;transform:scaleX(0.9544);">Browser</div>
<svg class="a" style="left:268px;top:131px;" width="26" height="12" viewBox="0 0 26 12"><rect x="0.5" y="0.5" width="10" height="10" rx="2.2" fill="none" stroke="#6d6964"/><rect x="4.5" y="2.5" width="4" height="4" rx="1" fill="none" stroke="#6d6964"/><rect x="2.5" y="4.5" width="4" height="4" rx="1" fill="#f0f0f0" stroke="#6d6964"/><rect x="14.5" y="0.5" width="10" height="10" rx="2.2" fill="none" stroke="#6d6964"/><path d="M17 3l5 5M22 3l-5 5" stroke="#55514d" stroke-width="1.9" fill="none"/></svg>
<svg class="a" style="left:9px;top:153px;" width="16" height="16" viewBox="0 0 16 16"><rect x="1.500" y="1.500" width="11.500" height="11.500" fill="#eeeeec" stroke="#7c7c7a"/><rect x="9" y="10" width="6.500" height="6" rx="1.300" fill="#4f9a55"/><circle cx="12.200" cy="13" r="1.700" fill="#cfe6d0"/></svg>
<svg class="a" style="left:34px;top:153px;" width="16" height="16" viewBox="0 0 16 16"><g transform="translate(0,0)"><path d="M3.12 7.57A4.9 4.9 0 0 1 12.01 5.19" fill="none" stroke="#2e6ab0" stroke-width="4.0"/><path d="M14.70 2.58L8.64 6.82L13.85 7.81z" fill="#4a8ad4" stroke="#2e6ab0" stroke-width="0.9" stroke-linejoin="round"/><path d="M3.12 7.57A4.9 4.9 0 0 1 12.01 5.19" fill="none" stroke="#4a8ad4" stroke-width="3.1"/><path d="M2.68 6.77A5.46 5.46 0 0 1 11.86 4.14" fill="none" stroke="#8fbdf0" stroke-width="0.87" opacity="0.8"/><path d="M12.88 8.43A4.9 4.9 0 0 1 3.99 10.81" fill="none" stroke="#2e6ab0" stroke-width="4.0"/><path d="M1.30 13.42L7.36 9.18L2.15 8.19z" fill="#4a8ad4" stroke="#2e6ab0" stroke-width="0.9" stroke-linejoin="round"/><path d="M12.88 8.43A4.9 4.9 0 0 1 3.99 10.81" fill="none" stroke="#4a8ad4" stroke-width="3.1"/><path d="M13.32 9.23A5.46 5.46 0 0 1 4.14 11.86" fill="none" stroke="#8fbdf0" stroke-width="0.87" opacity="0.8"/></g></svg>
<svg class="a" style="left:59px;top:153px;" width="16" height="16" viewBox="0 0 16 16"><g transform="translate(0,0)"><path d="M1 1h14v1.800l-5.300 5.700v6.200l-3.400-1.500v-4.700L1 2.800z" fill="#6b97cb" stroke="#3d6a9c" stroke-width="0.800" stroke-linejoin="round"/><rect x="1.500" y="1.300" width="13" height="1.800" fill="#f5e050"/></g></svg>
<svg class="a" style="left:84px;top:153px;" width="16" height="16" viewBox="0 0 16 16"><path d="M0.500 2.500h9M2.500 2.500v12M2.500 7.500h2M2.500 13h2" stroke="#9a9a9a" stroke-width="1" fill="none"/><rect x="4.500" y="6" width="2.600" height="2.600" fill="#fff" stroke="#f39200" stroke-width="1.100"/><rect x="4.500" y="11.600" width="2.600" height="2.600" fill="#fff" stroke="#f39200" stroke-width="1.100"/><path d="M10.800 0.300l4.900 5.300h-3.100v9.400h-3.600v-9.400h-3.100z" fill="#5b8cc6" stroke="#27496d" stroke-width="0.900" stroke-linejoin="round"/></svg>
<svg class="a" style="left:109px;top:153px;" width="16" height="16" viewBox="0 0 16 16"><circle cx="8" cy="8" r="6.900" fill="#6b97cb" stroke="#557fb0" stroke-width="0.700"/><text x="6.100" y="11.800" font-family="Liberation Serif,serif" font-style="italic" font-weight="bold" font-size="10.500" fill="#fff">i</text></svg>
<div class="a" style="left:1px;top:177px;width:294px;height:366px;background:#fff;border:1px solid #a0a0a0;border-left:none;"></div>
<div class="a" style="left:1px;top:412px;width:172px;height:18px;background:#e5e5e5;"></div>
<div class="t" style="left:42.4px;top:180.19px;font-size:11px;line-height:16px;color:#000;transform:scaleX(0.9860);">Favorites</div>
<svg class="a" style="left:21px;top:179px;" width="16" height="16" viewBox="0 0 16 16"><path d="M8.00 0.60 L9.94 5.93 L15.61 6.13 L11.14 9.62 L12.70 15.07 L8.00 11.90 L3.30 15.07 L4.86 9.62 L0.39 6.13 L6.06 5.93z" fill="#fff45c" stroke="#d8b400" stroke-width="1" stroke-linejoin="round"/></svg>
<div class="t" style="left:42.4px;top:198.19px;font-size:11px;line-height:16px;color:#000;transform:scaleX(0.9324);">Spatial Bookmarks</div>
<svg class="a" style="left:8px;top:201px;" width="5" height="8" viewBox="0 0 5 8"><path d="M0.3 0l4 4-4 4z" fill="#6e6e6e"/></svg>
<svg class="a" style="left:21px;top:197px;" width="16" height="16" viewBox="0 0 16 16"><path d="M3.500 1.500h11v13h-11z" fill="#e6e6e6" stroke="#a2a2a2" stroke-width="0.900"/><path d="M3.500 1.500c-2-1-2.500 0-2.500 1.500v10c0 2 2 1.700 2.500 1.500z" fill="#f6f6f6" stroke="#a2a2a2" stroke-width="0.900"/><path d="M1 12.500c0 2 1.500 2.300 3 2h10.500" fill="none" stroke="#a2a2a2" stroke-width="0.900"/><path d="M8.800 1h3v5l-1.500 1.500-1.500-1.500z" fill="#6b97cb" stroke="#4d79ad" stroke-width="0.600"/></svg>
<div class="t" style="left:42.4px;top:216.19px;font-size:11px;line-height:16px;color:#000;transform:scaleX(0.9575);">Project Home</div>
<svg class="a" style="left:8px;top:219px;" width="5" height="8" viewBox="0 0 5 8"><path d="M0.3 0l4 4-4 4z" fill="#6e6e6e"/></svg>
<svg class="a" style="left:21px;top:215px;" width="16" height="16" viewBox="0 0 16 16"><path d="M1.500 14.500v-12h5l1.500 1.800h6.500v10.200z" fill="#b4e05c" stroke="#7fb030" stroke-width="0.900" stroke-linejoin="round"/><path d="M2 6l12.500 8M2 13.500l8-8.500" stroke="#f4fbe4" stroke-width="1.100" fill="none"/><path d="M8.500 6.500l3-2.300 3 1.500-2 4.300z" fill="#1a8a10"/></svg>
<div class="t" style="left:42.4px;top:234.19px;font-size:11px;line-height:16px;color:#000;transform:scaleX(0.8998);">Home</div>
<svg class="a" style="left:8px;top:237px;" width="5" height="8" viewBox="0 0 5 8"><path d="M0.3 0l4 4-4 4z" fill="#6e6e6e"/></svg>
<svg class="a" style="left:21px;top:233px;" width="16" height="16" viewBox="0 0 16 16"><path d="M1.500 14.500v-12h5l1.500 2h6.500v10z" fill="#f2f2f2" stroke="#8c8c8c" stroke-width="1" stroke-linejoin="round"/><path d="M5 10.300l3.300-3.300 3.300 3.300M6.200 9.500v3.500h4.200v-3.500" fill="none" stroke="#222" stroke-width="1"/></svg>
<div class="t" style="left:42.4px;top:252.19px;font-size:11px;line-height:16px;color:#000;transform:scaleX(1.1312);">C:\</div>
<svg class="a" style="left:8px;top:255px;" width="5" height="8" viewBox="0 0 5 8"><path d="M0.3 0l4 4-4 4z" fill="#6e6e6e"/></svg>
<svg class="a" style="left:21px;top:251px;" width="16" height="16" viewBox="0 0 16 16"><path d="M1.500 14.500v-12h5l1.500 2h6.500v10z" fill="#f2f2f2" stroke="#8c8c8c" stroke-width="1" stroke-linejoin="round"/></svg>
<div class="t" style="left:42.4px;top:270.19px;font-size:11px;line-height:16px;color:#000;transform:scaleX(0.9577);">D:\ (Local Disk)</div>
<svg class="a" style="left:8px;top:273px;" width="5" height="8" viewBox="0 0 5 8"><path d="M0.3 0l4 4-4 4z" fill="#6e6e6e"/></svg>
<svg class="a" style="left:21px;top:269px;" width="16" height="16" viewBox="0 0 16 16"><path d="M1.500 14.500v-12h5l1.500 2h6.500v10z" fill="#f2f2f2" stroke="#8c8c8c" stroke-width="1" stroke-linejoin="round"/></svg>
<div class="t" style="left:42.4px;top:288.19px;font-size:11px;line-height:16px;color:#000;transform:scaleX(0.9183);">GeoPackage</div>
<svg class="a" style="left:21px;top:287px;" width="16" height="16" viewBox="0 0 16 16"><ellipse cx="8" cy="5.300" rx="5.300" ry="4.800" fill="#7ea6d6" stroke="#3d6aa0" stroke-width="0.600"/><path d="M5 3c1-1 2.500-.5 2.500.5S6 5 6 6s-1.500.5-1.500-.5 0-2 .5-2.500zM9.500 2.500c1.500 0 3 1 3 2.500s-1.500.5-2 1.500-1.500 0-1.500-1-0-2 .5-3z" fill="#2e5a94"/><path d="M0.500 6l7.500 3v6.500l-7.500-4z" fill="#e3b21a" stroke="#7a5c00" stroke-width="0.700"/><path d="M8 9l7.500-3.300v6.300l-7.500 3.500z" fill="#fbe36a" stroke="#7a5c00" stroke-width="0.700"/><path d="M0.500 6l3-1.300M15.500 5.700l-3-1.200" stroke="#7a5c00" stroke-width="0.700"/></svg>
<div class="t" style="left:42.4px;top:306.19px;font-size:11px;line-height:16px;color:#000;transform:scaleX(0.9566);">SpatiaLite</div>
<svg class="a" style="left:21px;top:305px;" width="16" height="16" viewBox="0 0 16 16"><path d="M15.500 0.500C9.500 1.500 4.500 6 2 13.500c2.700-.7 4.700-1.700 6.300-3l-.7-.3c2-1 3.300-2.300 4.300-3.700l-1-.2C13 4.500 14.800 2.500 15.500 0.500z" fill="#8fb1d9" stroke="#3e6a9c" stroke-width="0.600"/><path d="M14.500 1.500C9 5 4 10 0.800 15.500" fill="none" stroke="#3e6a9c" stroke-width="0.900"/></svg>
<div class="t" style="left:42.4px;top:324.19px;font-size:11px;line-height:16px;color:#000;transform:scaleX(0.9279);">PostgreSQL</div>
<svg class="a" style="left:21px;top:323px;" width="16" height="16" viewBox="0 0 16 16"><path d="M8 0.800c-4 0-7 1.500-7 5 0 3 1.500 5.500 3 6.500 1 .700 1.800 0 1.800-1l.2-2c.5.500 1.200.700 2 .700v3.500c0 1.500 1 2.200 2.200 2.200s2-1 2-2.200v-2.700c1.500.3 3-.300 3-.300-.800-.500-1.200-1-1.200-1.500 1.200-1.500 1.800-3.200 1.800-4.700 0-2.500-2.800-3.500-7.800-3.500z" fill="#6d99cc" stroke="#3c6ba2" stroke-width="0.700"/><path d="M5.800 3.500c-.800 2-.800 4 0 6M10.200 3.300c1 2 1 4.500-.200 6.700" fill="none" stroke="#3c6ba2" stroke-width="0.700"/><circle cx="11.800" cy="4.500" r="0.600" fill="#fff"/></svg>
<div class="t" style="left:42.4px;top:342.19px;font-size:11px;line-height:16px;color:#000;transform:scaleX(0.8894);">SAP HANA</div>
<svg class="a" style="left:21px;top:341px;" width="16" height="16" viewBox="0 0 16 16"><rect x="1.500" y="1.500" width="13" height="13" fill="none" stroke="#222" stroke-width="1" stroke-dasharray="1 1.500"/><rect x="3.500" y="3.500" width="9" height="9" fill="#6b97cb"/></svg>
<div class="t" style="left:42.4px;top:360.19px;font-size:11px;line-height:16px;color:#000;transform:scaleX(0.9150);">MS SQL Server</div>
<svg class="a" style="left:8px;top:363px;" width="5" height="8" viewBox="0 0 5 8"><path d="M0.3 0l4 4-4 4z" fill="#6e6e6e"/></svg>
<svg class="a" style="left:21px;top:359px;" width="16" height="16" viewBox="0 0 16 16"><path d="M1 0.800c5-.500 11 1.500 14.500 6.200-4.500 1-9.500 3.500-14.500 8 2.500-4.500 2.500-9.700 0-14.200z" fill="#6b97cb" stroke="#3d6a9c" stroke-width="0.800" stroke-linejoin="round"/><path d="M4.500 1.200c2.500 3.500 2.500 7.500 0 10.800M8 2.200c2 2.500 2 5.500 0 7.800M11.200 4c1.200 1.500 1.200 3 0 4.500" fill="none" stroke="#3d6a9c" stroke-width="0.700"/></svg>
<div class="t" style="left:42.4px;top:378.19px;font-size:11px;line-height:16px;color:#000;transform:scaleX(0.9445);">Oracle</div>
<svg class="a" style="left:8px;top:381px;" width="5" height="8" viewBox="0 0 5 8"><path d="M0.3 0l4 4-4 4z" fill="#6e6e6e"/></svg>
<svg class="a" style="left:21px;top:377px;" width="16" height="16" viewBox="0 0 16 16"><rect x="0.800" y="2.800" width="14.500" height="10.400" rx="4.200" fill="#6b97cb" stroke="#27496d" stroke-width="1.300"/></svg>
<div class="t" style="left:42.4px;top:396.19px;font-size:11px;line-height:16px;color:#000;transform:scaleX(0.9049);">WMS/WMTS</div>
<svg class="a" style="left:8px;top:399px;" width="5" height="8" viewBox="0 0 5 8"><path d="M0.3 0l4 4-4 4z" fill="#6e6e6e"/></svg>
<svg class="a" style="left:21px;top:395px;" width="16" height="16" viewBox="0 0 16 16"><ellipse cx="8" cy="8" rx="7.300" ry="6.800" fill="#a9c7ea" stroke="#5b86b5" stroke-width="0.900"/><path d="M3 4.500c1-1.500 3-2 3.500-1s-1 1.500-.500 2.500-1 2-1.500 3-1.500-.500-1.800-2 0-2 .300-2.500zM8.500 2.800c1.500-.800 3.500 0 4.500 1.500s-.500 1.500-1.500 1.200-1.200 1.500-.500 2.500 1 3-.500 3.500-1.500-1.500-2-3-.500-4.500 0-5.700zM5.500 10.500c.800 0 1.500 1 1 2.500s-1.500.500-1.500-.500 0-2 .500-2z" fill="#34587f"/></svg>
<div class="t" style="left:42.4px;top:414.19px;font-size:11px;line-height:16px;color:#000;transform:scaleX(0.9185);">Scenes</div>
<svg class="a" style="left:6px;top:419px;" width="8" height="5" viewBox="0 0 8 5"><path d="M0 0.3h8l-4 4z" fill="#6e6e6e"/></svg>
<svg class="a" style="left:21px;top:413px;" width="16" height="16" viewBox="0 0 16 16"><path d="M8 1l6 3-6 3-6-3z" fill="#e3ecf6" stroke="#5b86b5" stroke-width="0.800" stroke-linejoin="round"/><path d="M2 4l6 3v8l-6-3z" fill="#a9c4e2" stroke="#5b86b5" stroke-width="0.800" stroke-linejoin="round"/><path d="M14 4l-6 3v8l6-3z" fill="#c9daee" stroke="#5b86b5" stroke-width="0.800" stroke-linejoin="round"/></svg>
<div class="t" style="left:58.4px;top:432.19px;font-size:11px;line-height:16px;color:#000;transform:scaleX(1.0107);">Bathurst</div>
<svg class="a" style="left:37px;top:431px;" width="16" height="16" viewBox="0 0 16 16"><g fill="#b5cde8" stroke="#7ea2cc" stroke-width="0.500"><path d="M8 0.500l3.500 3.500-3.500 3.500-3.500-3.500zM4 4.500l3.500 3.500-3.500 3.500-3.500-3.500zM8 8.500l3.500 3.500-3.500 3.500-3.500-3.500z"/></g><g fill="#6f9ace"><path d="M12 4.800l1.500 1.500-1.500 1.500-1.500-1.500zM14 6.800l1.500 1.500-1.500 1.500-1.500-1.500zM10 6.800l1.500 1.500-1.500 1.500-1.500-1.500zM12 8.800l1.500 1.500-1.500 1.500-1.500-1.500z"/></g></svg>
<div class="t" style="left:42.4px;top:450.19px;font-size:11px;line-height:16px;color:#000;transform:scaleX(0.9586);">Vector Tiles</div>
<svg class="a" style="left:8px;top:453px;" width="5" height="8" viewBox="0 0 5 8"><path d="M0.3 0l4 4-4 4z" fill="#6e6e6e"/></svg>
<svg class="a" style="left:21px;top:449px;" width="16" height="16" viewBox="0 0 16 16"><rect x="1" y="1" width="14" height="14" rx="1" fill="#2f4763"/><rect x="2.3" y="2.3" width="2.800" height="2.800" fill="#ffffff"/><rect x="6.6" y="2.3" width="2.800" height="2.800" fill="#ffffff"/><rect x="10.899999999999999" y="2.3" width="2.800" height="2.800" fill="#ffffff"/><rect x="2.3" y="6.6" width="2.800" height="2.800" fill="#e4edf8"/><rect x="6.6" y="6.6" width="2.800" height="2.800" fill="#e4edf8"/><rect x="10.899999999999999" y="6.6" width="2.800" height="2.800" fill="#e4edf8"/><rect x="2.3" y="10.899999999999999" width="2.800" height="2.800" fill="#a9c7ea"/><rect x="6.6" y="10.899999999999999" width="2.800" height="2.800" fill="#a9c7ea"/><rect x="10.899999999999999" y="10.899999999999999" width="2.800" height="2.800" fill="#a9c7ea"/></svg>
<div class="t" style="left:42.4px;top:468.19px;font-size:11px;line-height:16px;color:#000;transform:scaleX(0.8839);">XYZ Tiles</div>
<svg class="a" style="left:8px;top:471px;" width="5" height="8" viewBox="0 0 5 8"><path d="M0.3 0l4 4-4 4z" fill="#6e6e6e"/></svg>
<svg class="a" style="left:21px;top:467px;" width="16" height="16" viewBox="0 0 16 16"><rect x="1" y="1" width="4" height="4" fill="#6b97cb"/><rect x="6" y="1" width="4" height="4" fill="#6b97cb"/><rect x="11" y="1" width="4" height="4" fill="#6b97cb"/><rect x="1" y="6" width="4" height="4" fill="#6b97cb"/><rect x="6" y="6" width="4" height="4" fill="#6b97cb"/><rect x="11" y="6" width="4" height="4" fill="#6b97cb"/><rect x="1" y="11" width="4" height="4" fill="#6b97cb"/><rect x="6" y="11" width="4" height="4" fill="#6b97cb"/><rect x="11" y="11" width="4" height="4" fill="#6b97cb"/></svg>
<div class="t" style="left:42.4px;top:486.19px;font-size:11px;line-height:16px;color:#000;transform:scaleX(0.8767);">WCS</div>
<svg class="a" style="left:21px;top:485px;" width="16" height="16" viewBox="0 0 16 16"><ellipse cx="8" cy="8" rx="7.200" ry="6.600" fill="#6b97cb" stroke="#1f3a5c" stroke-width="1.300"/><path d="M1.500 5.500h13M1.500 10.500h13" stroke="#1f3a5c" stroke-width="1.300"/><path d="M2 8h12" stroke="#dfe9f6" stroke-width="2.200"/><path d="M8 1.500c-3 2-3 11 0 13M8 1.500c3 2 3 11 0 13" fill="none" stroke="#1f3a5c" stroke-width="0.900"/><rect x="5.500" y="6.500" width="5" height="3" fill="#2f5688"/></svg>
<div class="t" style="left:42.4px;top:504.19px;font-size:11px;line-height:16px;color:#000;transform:scaleX(0.9597);">WFS / OGC API - Features</div>
<svg class="a" style="left:8px;top:507px;" width="5" height="8" viewBox="0 0 5 8"><path d="M0.3 0l4 4-4 4z" fill="#6e6e6e"/></svg>
<svg class="a" style="left:21px;top:503px;" width="16" height="16" viewBox="0 0 16 16"><ellipse cx="8" cy="8" rx="7.300" ry="6.800" fill="#fbfdff" stroke="#6b97cb" stroke-width="0.900"/><path d="M1 6h14M1 10.500h14M8 1.200c-3.500 2-3.500 11.500 0 13.600M8 1.200c3.500 2 3.500 11.500 0 13.600" fill="none" stroke="#a9c7ea" stroke-width="0.700"/><path d="M3.800 4.500c1-1 2-.800 2.500 0l2 7 2-7c.500-.800 1.500-1 2.500 0" fill="none" stroke="#34495e" stroke-width="1.200"/></svg>
<div class="t" style="left:42.4px;top:522.19px;font-size:11px;line-height:16px;color:#000;transform:scaleX(0.9255);">ArcGIS REST Servers</div>
<svg class="a" style="left:21px;top:521px;" width="16" height="16" viewBox="0 0 16 16"><ellipse cx="8" cy="8" rx="7.300" ry="6.800" fill="#fbfdff" stroke="#6b97cb" stroke-width="0.900"/><path d="M1 6h14M1 10.500h14M8 1.200c3.500 2 3.500 11.500 0 13.600" fill="none" stroke="#a9c7ea" stroke-width="0.700"/><path d="M2 5c1.500-2 3.500-2.500 4-1.500s-1 2-1 3 1.500 2 1 3.500-1.500 4-3 3.500-2-6-1-8.500z" fill="#27394d"/><path d="M6.500 9c.5-3 2-5 4-5.500M10 3l2.500 1" fill="none" stroke="#34495e" stroke-width="1.100"/></svg>
<div class="a" style="left:141px;top:545px;width:1px;height:1px;background:#b0b0b0;"></div>
<div class="a" style="left:144px;top:545px;width:1px;height:1px;background:#b0b0b0;"></div>
<div class="a" style="left:147px;top:545px;width:1px;height:1px;background:#b0b0b0;"></div>
<div class="a" style="left:150px;top:545px;width:1px;height:1px;background:#b0b0b0;"></div>
<div class="a" style="left:153px;top:545px;width:1px;height:1px;background:#b0b0b0;"></div>
<div class="a" style="left:156px;top:545px;width:1px;height:1px;background:#b0b0b0;"></div>
<div class="a" style="left:298px;top:427px;width:1px;height:1px;background:#b0b0b0;"></div>
<div class="a" style="left:298px;top:430px;width:1px;height:1px;background:#b0b0b0;"></div>
<div class="a" style="left:298px;top:433px;width:1px;height:1px;background:#b0b0b0;"></div>
<div class="a" style="left:298px;top:436px;width:1px;height:1px;background:#b0b0b0;"></div>
<div class="a" style="left:298px;top:439px;width:1px;height:1px;background:#b0b0b0;"></div>
<div class="a" style="left:298px;top:442px;width:1px;height:1px;background:#b0b0b0;"></div>
<div class="a" style="left:935px;top:427px;width:1px;height:1px;background:#b0b0b0;"></div>
<div class="a" style="left:935px;top:430px;width:1px;height:1px;background:#b0b0b0;"></div>
<div class="a" style="left:935px;top:433px;width:1px;height:1px;background:#b0b0b0;"></div>
<div class="a" style="left:935px;top:436px;width:1px;height:1px;background:#b0b0b0;"></div>
<div class="a" style="left:935px;top:439px;width:1px;height:1px;background:#b0b0b0;"></div>
<div class="a" style="left:935px;top:442px;width:1px;height:1px;background:#b0b0b0;"></div>
<div class="t" style="left:4px;top:551.19px;font-size:11px;line-height:16px;color:#000;transform:scaleX(0.9693);">Layers</div>
<svg class="a" style="left:268px;top:553px;" width="26" height="12" viewBox="0 0 26 12"><rect x="0.5" y="0.5" width="10" height="10" rx="2.2" fill="none" stroke="#6d6964"/><rect x="4.5" y="2.5" width="4" height="4" rx="1" fill="none" stroke="#6d6964"/><rect x="2.5" y="4.5" width="4" height="4" rx="1" fill="#f0f0f0" stroke="#6d6964"/><rect x="14.5" y="0.5" width="10" height="10" rx="2.2" fill="none" stroke="#6d6964"/><path d="M17 3l5 5M22 3l-5 5" stroke="#55514d" stroke-width="1.9" fill="none"/></svg>
<div class="a" style="left:5px;top:572px;width:24px;height:23px;background:#e0e0e0;border:1px solid #adadad;border-radius:3px;"></div>
<svg class="a" style="left:9.5px;top:576.5px;" width="15.5" height="13" viewBox="-0.5 -0.5 16.5 14"><path d="M0.500 6.500l4.500-4 3 2.500-5 5z" fill="#f7d940"/><path d="M0 8.500l4-3.500 3.500 3-4 3.500z" fill="#5b8fd6"/><path d="M0.300 11l3.500-3 4 3.500-1.500 1.800z" fill="#e8403a"/><path d="M9.500 6.500l5.800-6" stroke="#d9982f" stroke-width="1.700" stroke-linecap="round"/><path d="M5 8.500l4-3.500 3 3.300-4.500 5.200-3.500-3z" fill="#dcb073" stroke="#b98a45" stroke-width="0.600"/><path d="M8.300 5.700l2.800 3" stroke="#a87a38" stroke-width="0.700"/></svg>
<svg class="a" style="left:34px;top:575px;" width="16" height="16" viewBox="0 0 16 16"><path d="M1 7v8.500h8.500" fill="none" stroke="#7a7a7a" stroke-width="1"/><path d="M3.500 5v8h8" fill="none" stroke="#7a7a7a" stroke-width="1"/><rect x="5.500" y="2.500" width="8" height="8.500" fill="#f4f4f4" stroke="#7a7a7a" stroke-width="1"/><path d="M7.500 9V2.500a1.600 1.600 0 0 1 3.200 0V8" fill="none" stroke="#3f72b4" stroke-width="1.100"/><rect x="9" y="10" width="6.500" height="6" rx="1.300" fill="#4f9a55"/><circle cx="12.200" cy="13" r="1.700" fill="#e6f2e6"/></svg>
<svg class="a" style="left:59px;top:575px;" width="17" height="16" viewBox="0 0 17 16"><path d="M0.500 8c3-5.500 10-6 14.500-.5-3.500 5.500-11 5.500-14.500.5z" fill="#fdfdfd" stroke="#8a8a8a" stroke-width="0.800"/><path d="M1 5.500c3-3 9-3.500 13-.500" fill="none" stroke="#9a9a9a" stroke-width="0.700"/><circle cx="7.600" cy="8" r="3.500" fill="#5d8fd3"/><circle cx="7.600" cy="8" r="1.500" fill="#111"/><circle cx="8.400" cy="7.200" r="0.600" fill="#fff"/><path d="M11.500 13.500h6l-3 3z" fill="#555"/></svg>
<svg class="a" style="left:85px;top:575px;" width="17" height="16" viewBox="0 0 17 16"><g transform="translate(0,0.3)"><path d="M1 1h14v1.800l-5.300 5.700v6.200l-3.400-1.500v-4.700L1 2.800z" fill="#6b97cb" stroke="#3d6a9c" stroke-width="0.800" stroke-linejoin="round"/><rect x="1.500" y="1.300" width="13" height="1.800" fill="#f5e050"/></g><path d="M11.500 13.500h6l-3 3z" fill="#555"/></svg>
<svg class="a" style="left:111px;top:575px;" width="16" height="16" viewBox="0 0 16 16"><text x="-0.300" y="10.800" font-family="Liberation Serif,serif" font-size="18" fill="#cbcbcb">ε</text><path d="M7 8.200h7.500v7.500h-2.300l-1.400-3.200-1.400 3.200h-2.400z" fill="#dcdcdc"/></svg>
<svg class="a" style="left:131px;top:581px;" width="8" height="5" viewBox="0 0 8 5"><path d="M0 0h8l-4 4.500z" fill="#a8a8a8"/></svg>
<svg class="a" style="left:147px;top:575px;" width="16" height="16" viewBox="0 0 16 16"><path d="M0.500 2.500h9M2.500 2.500v12M2.500 7.500h2M2.500 13h2" stroke="#9a9a9a" stroke-width="1" fill="none"/><rect x="4.500" y="6" width="2.600" height="2.600" fill="#fff" stroke="#f39200" stroke-width="1.100"/><rect x="4.500" y="11.600" width="2.600" height="2.600" fill="#fff" stroke="#f39200" stroke-width="1.100"/><path d="M10.800 15.500l4.900-5.300h-3.100v-9.400h-3.600v9.400h-3.100z" fill="#5b8cc6" stroke="#27496d" stroke-width="0.900" stroke-linejoin="round"/></svg>
<svg class="a" style="left:172px;top:574.5px;" width="16" height="16" viewBox="0 0 16 16"><path d="M0.500 2.500h9M2.500 2.500v12M2.500 7.500h2M2.500 13h2" stroke="#9a9a9a" stroke-width="1" fill="none"/><rect x="4.500" y="6" width="2.600" height="2.600" fill="#fff" stroke="#f39200" stroke-width="1.100"/><rect x="4.500" y="11.600" width="2.600" height="2.600" fill="#fff" stroke="#f39200" stroke-width="1.100"/><path d="M10.800 0.300l4.900 5.300h-3.100v9.400h-3.600v-9.400h-3.100z" fill="#5b8cc6" stroke="#27496d" stroke-width="0.900" stroke-linejoin="round"/></svg>
<svg class="a" style="left:196px;top:575px;" width="16" height="16" viewBox="0 0 16 16"><rect x="1.500" y="1.500" width="11.500" height="11.500" fill="#f4f4f4" stroke="#7c7c7a"/><rect x="9" y="10" width="6.500" height="5" rx="1.300" fill="#ee2c3c"/><path d="M10.300 12.500h4" stroke="#fff" stroke-width="1.300"/></svg>
<div class="a" style="left:1px;top:599px;width:294px;height:142px;background:#fff;border:1px solid #a0a0a0;border-left:none;"></div>
<div class="a" style="left:1px;top:600px;width:293px;height:18px;background:#f0f0f0;"></div>
<div class="a" style="left:25px;top:603px;width:13px;height:13px;background:#fff;border:1px solid #b5b5b5;"></div>
<svg class="a" style="left:25px;top:603px;" width="13" height="13" viewBox="0 0 13 13"><path d="M3 6.2l2.6 3.3L10 2.8" stroke="#000" stroke-width="1.9" fill="none"/></svg>
<svg class="a" style="left:46px;top:601px;" width="14" height="16" viewBox="0 0 14 16"><path d="M1.200 5.400l5.800 2.800 5.800-2.800v7.300l-5.800 3-5.800-3z" fill="#d8dfea" stroke="#8595ad" stroke-width="0.900" stroke-linejoin="round"/><path d="M7 8.200v7.500" stroke="#8595ad" stroke-width="0.900"/><path d="M7 8.200l5.800-2.800v7.300l-5.800 3z" fill="#e6eaf1" opacity="0.800"/><path d="M7 0.400l5.900 2.700-5.900 2.700-5.900-2.700z" fill="#dde3ec" stroke="#8595ad" stroke-width="0.900" stroke-linejoin="round"/><path d="M1.800 5.600l5.200 2.500 5.200-2.500" fill="none" stroke="#f4f4f4" stroke-width="0.800" stroke-dasharray="1.800 1.200"/><rect x="2.500" y="8.300" width="1.100" height="2.200" rx="0.500" fill="#6b89b0"/><rect x="4.700" y="9.300" width="1.100" height="2.200" rx="0.500" fill="#6b89b0"/><path d="M8.800 10.800c0-1 .400-1.700 1-2s1.100 0 1.100 1v3.800l-2.100 1z" fill="#6483ab"/></svg>
<div class="t" style="left:67.2px;top:601.99px;font-size:11px;line-height:16px;color:#000;font-weight:bold;transform:scaleX(1.0747);text-decoration:underline;text-underline-offset:1px;">Bathurst</div>
<div class="a" style="left:301px;top:126px;width:631px;height:615px;background:#fff;border:1px solid #a3a3a3;"></div>
<div class="a" style="left:302px;top:127px;width:629px;height:1px;background:#cfcfcf;"></div>
<svg class="a" style="left:440px;top:295px;" width="370" height="290" viewBox="0 0 370 290"><defs><clipPath id="aclip"><polygon points="17.5,170.5 48.0,147.5 181.0,58.5 248.4,14.6 350.5,116.0 180.0,232.0 115.6,274.2 65.0,221.0"/></clipPath><filter id="anoise" x="0" y="0" width="100%" height="100%" color-interpolation-filters="sRGB"><feTurbulence type="fractalNoise" baseFrequency="0.19" numOctaves="2" seed="11" result="n"/><feColorMatrix in="n" type="matrix" values="0.65 0.45 0.45 0 -0.275  0.45 0.6 0.45 0 -0.25  0.45 0.45 0.55 0 -0.225  0 0 0 0 1"/><feGaussianBlur stdDeviation="0.9"/></filter><filter id="anoise2" x="0" y="0" width="100%" height="100%" color-interpolation-filters="sRGB"><feTurbulence type="fractalNoise" baseFrequency="0.055" numOctaves="2" seed="5" result="n"/><feColorMatrix in="n" type="matrix" values="0.9 0.5 0.5 0 -0.43  0.55 0.75 0.55 0 -0.43  0.55 0.55 0.6 0 -0.4  0 0 0 0 1"/></filter><filter id="aspeck" x="0" y="0" width="100%" height="100%" color-interpolation-filters="sRGB"><feTurbulence type="fractalNoise" baseFrequency="0.2" numOctaves="1" seed="3" result="n"/><feColorMatrix in="n" type="matrix" values="0 0 0 0 0.82  0 0 0 0 0.84  0 0 0 0 0.85  5 5 0 0 -5.85"/><feGaussianBlur stdDeviation="0.6"/></filter><filter id="ablur" x="-20%" y="-20%" width="140%" height="140%"><feGaussianBlur stdDeviation="2.2"/></filter><filter id="ablur3" x="-30%" y="-30%" width="160%" height="160%"><feGaussianBlur stdDeviation="9"/></filter><filter id="ablur2" x="-20%" y="-20%" width="140%" height="140%"><feGaussianBlur stdDeviation="1.1"/></filter><mask id="amask"><ellipse cx="200" cy="120" rx="85" ry="27" fill="#fff" transform="rotate(-34 200 120)" filter="url(#ablur3)"/></mask></defs><g clip-path="url(#aclip)"><rect x="0" y="0" width="370" height="290" fill="#78795f"/><g filter="url(#ablur3)"><ellipse cx="80.0" cy="210.0" rx="62" ry="42" fill="#87855a" opacity="0.7" transform="rotate(45 80.0 210.0)"/><ellipse cx="120.0" cy="261.0" rx="32" ry="20" fill="#908b58" opacity="0.75" transform="rotate(-34 120.0 261.0)"/><ellipse cx="40.0" cy="170.0" rx="22" ry="16" fill="#85835c" opacity="0.6" transform="rotate(45 40.0 170.0)"/><ellipse cx="310.0" cy="90.0" rx="34" ry="22" fill="#7f8f48" opacity="0.75" transform="rotate(42 310.0 90.0)"/></g><g filter="url(#ablur)"><ellipse cx="200.0" cy="120.0" rx="75" ry="22" fill="#8a8a82" opacity="0.7" transform="rotate(-34 200.0 120.0)"/><ellipse cx="215.0" cy="110.0" rx="40" ry="12" fill="#908f8a" opacity="0.5" transform="rotate(-34 215.0 110.0)"/><ellipse cx="150.0" cy="157.0" rx="34" ry="14" fill="#80837a" opacity="0.45" transform="rotate(-34 150.0 157.0)"/><ellipse cx="135.0" cy="115.0" rx="40" ry="14" fill="#7c7f66" opacity="0.5" transform="rotate(-34 135.0 115.0)"/><ellipse cx="254.0" cy="81.0" rx="3.5" ry="2.5" fill="#7fb9c4" opacity="0.9" transform="rotate(0 254.0 81.0)"/><ellipse cx="76.0" cy="188.0" rx="15" ry="9" fill="#8c9850" opacity="0.95" transform="rotate(55 76.0 188.0)"/><ellipse cx="164.0" cy="243.0" rx="11" ry="8" fill="#8c9852" opacity="0.9" transform="rotate(-34 164.0 243.0)"/><ellipse cx="131.0" cy="223.0" rx="9" ry="6" fill="#8a954e" opacity="0.7" transform="rotate(-34 131.0 223.0)"/><ellipse cx="109.0" cy="245.0" rx="14" ry="9" fill="#8e9a54" opacity="0.85" transform="rotate(-34 109.0 245.0)"/><ellipse cx="90.0" cy="225.0" rx="8" ry="5" fill="#929c52" opacity="0.6" transform="rotate(50 90.0 225.0)"/><ellipse cx="106.0" cy="263.0" rx="8" ry="5" fill="#a39a55" opacity="0.7" transform="rotate(-34 106.0 263.0)"/><ellipse cx="182.0" cy="135.0" rx="8" ry="5.5" fill="#3f5230" opacity="0.9" transform="rotate(-34 182.0 135.0)"/><ellipse cx="120.0" cy="195.0" rx="6" ry="4" fill="#55623a" opacity="0.6" transform="rotate(-34 120.0 195.0)"/><ellipse cx="160.0" cy="205.0" rx="7" ry="4" fill="#56633a" opacity="0.5" transform="rotate(-34 160.0 205.0)"/><ellipse cx="262.0" cy="136.0" rx="10" ry="7" fill="#7f9444" opacity="0.95" transform="rotate(-34 262.0 136.0)"/><ellipse cx="298.0" cy="138.0" rx="18" ry="8" fill="#849a46" opacity="0.95" transform="rotate(-34 298.0 138.0)"/><ellipse cx="286.0" cy="57.0" rx="15" ry="8" fill="#8a9a48" opacity="0.95" transform="rotate(42 286.0 57.0)"/><ellipse cx="263.0" cy="37.0" rx="8" ry="5" fill="#b29c45" opacity="0.9" transform="rotate(42 263.0 37.0)"/><ellipse cx="328.0" cy="107.0" rx="12" ry="6" fill="#8a9c47" opacity="0.8" transform="rotate(40 328.0 107.0)"/><ellipse cx="254.0" cy="27.0" rx="5.5" ry="13" fill="#44532c" opacity="0.95" transform="rotate(-15 254.0 27.0)"/><ellipse cx="266.0" cy="73.0" rx="5.5" ry="26" fill="#45542d" opacity="0.95" transform="rotate(-8 266.0 73.0)"/><ellipse cx="312.0" cy="83.0" rx="4.5" ry="26" fill="#48582c" opacity="0.9" transform="rotate(-44 312.0 83.0)"/><ellipse cx="336.0" cy="103.0" rx="4.5" ry="12" fill="#46562c" opacity="0.9" transform="rotate(-50 336.0 103.0)"/><ellipse cx="277.5" cy="152.0" rx="6.5" ry="5.5" fill="#d8c7a2" opacity="0.95" transform="rotate(0 277.5 152.0)"/><ellipse cx="243.0" cy="39.0" rx="5" ry="4" fill="#b9b8a8" opacity="0.8" transform="rotate(0 243.0 39.0)"/></g><rect x="0" y="0" width="370" height="290" filter="url(#anoise2)" style="mix-blend-mode:soft-light" opacity="0.6"/><g mask="url(#amask)"><rect x="0" y="0" width="370" height="290" filter="url(#aspeck)" opacity="0.5"/></g><g filter="url(#ablur2)"><ellipse cx="231.0" cy="130.0" rx="9.5" ry="6.5" fill="#d2d4d6" opacity="0.95" transform="rotate(-34 231.0 130.0)"/><ellipse cx="241.0" cy="121.0" rx="9" ry="5" fill="#8ea4c2" opacity="0.95" transform="rotate(-34 241.0 121.0)"/><ellipse cx="228.0" cy="137.0" rx="5" ry="4" fill="#c5c8c8" opacity="0.8" transform="rotate(-34 228.0 137.0)"/><ellipse cx="212.0" cy="103.0" rx="7" ry="5" fill="#aab0b4" opacity="0.8" transform="rotate(-34 212.0 103.0)"/><ellipse cx="200.0" cy="85.0" rx="6" ry="4" fill="#b4babc" opacity="0.7" transform="rotate(-34 200.0 85.0)"/><ellipse cx="220.0" cy="88.0" rx="5" ry="3.5" fill="#aeb8c0" opacity="0.7" transform="rotate(-34 220.0 88.0)"/><ellipse cx="186.0" cy="109.0" rx="7" ry="5" fill="#a2a8a8" opacity="0.7" transform="rotate(-34 186.0 109.0)"/><ellipse cx="170.0" cy="125.0" rx="6" ry="4" fill="#9ea4a4" opacity="0.6" transform="rotate(-34 170.0 125.0)"/><ellipse cx="156.0" cy="153.0" rx="7" ry="5" fill="#a0a4a4" opacity="0.6" transform="rotate(-34 156.0 153.0)"/><ellipse cx="144.0" cy="143.0" rx="5" ry="3.5" fill="#a9aeb0" opacity="0.6" transform="rotate(-34 144.0 143.0)"/><ellipse cx="291.0" cy="103.0" rx="18.5" ry="13.5" fill="#c6c09c" opacity="1" transform="rotate(-48 291.0 103.0)"/><ellipse cx="291.0" cy="103.0" rx="11" ry="6.5" fill="#7f9050" opacity="1" transform="rotate(-48 291.0 103.0)"/><ellipse cx="312.0" cy="111.0" rx="5" ry="4" fill="#c9c9b8" opacity="0.8" transform="rotate(0 312.0 111.0)"/><ellipse cx="317.0" cy="101.0" rx="4" ry="3" fill="#c5c5b4" opacity="0.7" transform="rotate(0 317.0 101.0)"/></g><rect x="0" y="0" width="370" height="290" filter="url(#anoise)" style="mix-blend-mode:overlay" opacity="0.7"/></g></svg>
<div class="t" style="left:941px;top:129.19px;font-size:11px;line-height:16px;color:#000;transform:scaleX(0.9751);">Layer Styling</div>
<svg class="a" style="left:1253px;top:131px;" width="26" height="12" viewBox="0 0 26 12"><rect x="0.5" y="0.5" width="10" height="10" rx="2.2" fill="none" stroke="#6d6964"/><rect x="4.5" y="2.5" width="4" height="4" rx="1" fill="none" stroke="#6d6964"/><rect x="2.5" y="4.5" width="4" height="4" rx="1" fill="#f0f0f0" stroke="#6d6964"/><rect x="14.5" y="0.5" width="10" height="10" rx="2.2" fill="none" stroke="#6d6964"/><path d="M17 3l5 5M22 3l-5 5" stroke="#55514d" stroke-width="1.9" fill="none"/></svg>
<div class="a" style="left:941px;top:149px;width:336px;height:24px;border:1px solid #adadad;background:linear-gradient(#fdfdfd,#f3f3f3 45%,#e9e9e9);border-radius:3px;"></div>
<svg class="a" style="left:1261.5px;top:158.5px;" width="8" height="5" viewBox="0 0 8 5"><path d="M0 0h8l-4 4.5z" fill="#4d4d4d"/></svg>
<svg class="a" style="left:948px;top:153px;" width="14" height="16" viewBox="0 0 14 16"><path d="M1.200 5.400l5.800 2.800 5.800-2.800v7.300l-5.800 3-5.800-3z" fill="#d8dfea" stroke="#8595ad" stroke-width="0.900" stroke-linejoin="round"/><path d="M7 8.200v7.500" stroke="#8595ad" stroke-width="0.900"/><path d="M7 8.200l5.800-2.800v7.300l-5.800 3z" fill="#e6eaf1" opacity="0.800"/><path d="M7 0.400l5.900 2.700-5.900 2.700-5.900-2.700z" fill="#dde3ec" stroke="#8595ad" stroke-width="0.900" stroke-linejoin="round"/><path d="M1.800 5.600l5.200 2.500 5.200-2.500" fill="none" stroke="#f4f4f4" stroke-width="0.800" stroke-dasharray="1.800 1.200"/><rect x="2.500" y="8.300" width="1.100" height="2.200" rx="0.500" fill="#6b89b0"/><rect x="4.700" y="9.300" width="1.100" height="2.200" rx="0.500" fill="#6b89b0"/><path d="M8.800 10.800c0-1 .400-1.700 1-2s1.100 0 1.100 1v3.800l-2.100 1z" fill="#6483ab"/></svg>
<div class="t" style="left:965.3px;top:153.89px;font-size:11px;line-height:16px;color:#000;transform:scaleX(1.0156);">Bathurst</div>
<svg class="a" style="left:948px;top:186px;" width="22" height="18" viewBox="-0.5 -0.5 16.5 14"><path d="M0.500 6.500l4.500-4 3 2.500-5 5z" fill="#f7d940"/><path d="M0 8.500l4-3.500 3.500 3-4 3.500z" fill="#5b8fd6"/><path d="M0.300 11l3.500-3 4 3.500-1.500 1.800z" fill="#e8403a"/><path d="M9.500 6.500l5.800-6" stroke="#d9982f" stroke-width="1.700" stroke-linecap="round"/><path d="M5 8.500l4-3.500 3 3.300-4.500 5.200-3.500-3z" fill="#dcb073" stroke="#b98a45" stroke-width="0.600"/><path d="M8.300 5.700l2.800 3" stroke="#a87a38" stroke-width="0.700"/></svg>
<div class="a" style="left:982px;top:185px;width:295px;height:22px;border:1px solid #adadad;background:linear-gradient(#fdfdfd,#f3f3f3 45%,#e9e9e9);border-radius:3px;"></div>
<svg class="a" style="left:1261.5px;top:193.5px;" width="8" height="5" viewBox="0 0 8 5"><path d="M0 0h8l-4 4.5z" fill="#4d4d4d"/></svg>
<div class="t" style="left:986.6px;top:188.69px;font-size:11px;line-height:16px;color:#000;transform:scaleX(1.0335);">Textured</div>
<div class="a" style="left:941px;top:211px;width:38px;height:527px;background:#5e5e5e;"></div>
<svg class="a" style="left:945px;top:216px;" width="22" height="22" viewBox="0 0 22 22"><path d="M11 0.800l9.500 5-9.500 5-9.500-5z" fill="#f58a8a" stroke="#cc0000" stroke-width="1.100" stroke-linejoin="round"/><path d="M1.500 5.800l9.500 5v10.700l-9.500-5z" fill="#8ae234" stroke="#4e9a06" stroke-width="1.100" stroke-linejoin="round"/><path d="M20.500 5.800l-9.500 5v10.700l9.500-5z" fill="#fce94f" stroke="#c4a000" stroke-width="1.100" stroke-linejoin="round"/></svg>
<svg class="a" style="left:945px;top:247px;" width="22" height="23" viewBox="0 0 22 23"><rect x="12.500" y="2" width="8" height="14" fill="#f8e02a" stroke="#c4a000" stroke-width="0.900"/><rect x="1.500" y="16.500" width="7" height="5.500" fill="#f8e02a" stroke="#c4a000" stroke-width="0.900"/><path d="M8 18h8" stroke="#777" stroke-width="1"/><path d="M10.500 18V5.500" stroke="#fff" stroke-width="3"/><path d="M6.500 7l4-5 4 5" fill="none" stroke="#fff" stroke-width="3"/><path d="M10.500 18V4" stroke="#111" stroke-width="1.300"/><path d="M6.800 6.800l3.700-4.500 3.700 4.500" fill="none" stroke="#111" stroke-width="1.300"/></svg>
<svg class="a" style="left:945px;top:282px;" width="22" height="17" viewBox="0 0 22 17"><path d="M7 1.500l14-1 1 14.500-15 1.500-6.500-4z" fill="#b9b9b9" stroke="#9c9c9c" stroke-width="0.700"/><path d="M7 1.500l-3 6 4 1.500 3-5.500zM12 3l5-.5-2 4.500-4 .5zM9 10l5-1 2 5-6 1z" fill="#e4e4e4"/><path d="M15.500 8l5-1 .7 6-4 .8z" fill="#d2d2d2"/><path d="M0.500 12.500l6.500 3.500 15-1.500" fill="none" stroke="#8a8a8a" stroke-width="0.800"/></svg>
<svg class="a" style="left:946px;top:312px;" width="21" height="21" viewBox="0 0 21 21"><path d="M3 10.700L9.800 2.700V7.800H14.500C18.500 7.800 21 10.500 21 14C21 17.500 18 20.800 12.200 21L12 18.200C14.500 17.800 15.800 16.500 15.800 15C15.800 13.600 14.800 13 13.500 13H9.800V18.900z" fill="#73c48f" transform="translate(14,-1.500) scale(-0.620,0.620)"/><path d="M3 10.700L9.800 2.700V7.800H14.500C18.500 7.800 21 10.500 21 14C21 17.500 18 20.800 12.200 21L12 18.200C14.500 17.800 15.800 16.500 15.800 15C15.800 13.600 14.800 13 13.500 13H9.800V18.900z" fill="#f08a3c" transform="translate(6.500,7) scale(0.620)"/></svg>
<div class="t" style="left:981.5px;top:218.89px;font-size:11px;line-height:16px;color:#000;transform:scaleX(0.9625);">Fill symbol</div>
<div class="a" style="left:1038px;top:213px;width:227px;height:27px;border:1px solid #adadad;background:linear-gradient(#fdfdfd,#f3f3f3 45%,#e9e9e9);border-radius:3px;"></div>
<div class="a" style="left:1043px;top:216px;width:218px;height:21px;background:#e0e0e0;border:1px solid #d0d0d0;"></div>
<div class="a" style="left:1266px;top:213px;width:11px;height:27px;border:1px solid #adadad;background:linear-gradient(#fdfdfd,#f3f3f3 45%,#e9e9e9);border-radius:2px;"></div>
<svg class="a" style="left:1268px;top:224.5px;" width="7" height="4" viewBox="0 0 7 4"><path d="M0 0h7l-3.5 4z" fill="#4d4d4d"/></svg>
<div class="t" style="left:983.2px;top:589.99px;font-size:11px;line-height:16px;color:#000;font-weight:bold;transform:scaleX(1.0599);">Layer Rendering</div>
<div class="a" style="left:983px;top:607px;width:294px;height:102px;background:#ececec;border:1px solid #dadada;border-radius:2px;"></div>
<div class="t" style="left:984.6px;top:621.19px;font-size:11px;line-height:16px;color:#000;transform:scaleX(0.9467);">Maximum error</div>
<div class="a" style="left:1062px;top:618px;width:100px;height:20px;background:#fff;border:1px solid #adadad;border-radius:3px;"></div>
<div class="a" style="left:1147px;top:619px;width:14px;height:18px;background:linear-gradient(#fdfdfd,#f3f3f3 45%,#e9e9e9);border-left:1px solid #c4c4c4;border-radius:0 2px 2px 0;"></div>
<svg class="a" style="left:1150.5px;top:622.0px;" width="7" height="12" viewBox="0 0 7 12"><path d="M0 4.5h7l-3.5-4z" fill="#4d4d4d"/><path d="M0 7.5h7l-3.5 4z" fill="#4d4d4d"/></svg>
<div class="t" style="left:1066.9px;top:621.19px;font-size:11px;line-height:16px;color:#000;transform:scaleX(0.9809);">3,000000</div>
<div class="a" style="left:1168px;top:617px;width:103px;height:22px;border:1px solid #adadad;background:linear-gradient(#fdfdfd,#f3f3f3 45%,#e9e9e9);border-radius:3px;"></div>
<svg class="a" style="left:1255.5px;top:625.5px;" width="8" height="5" viewBox="0 0 8 5"><path d="M0 0h8l-4 4.5z" fill="#4d4d4d"/></svg>
<div class="t" style="left:1172.4px;top:621.19px;font-size:11px;line-height:16px;color:#000;transform:scaleX(0.9324);">Millimeters</div>
<div class="t" style="left:984.6px;top:648.89px;font-size:11px;line-height:16px;color:#000;transform:scaleX(0.9815);">Opacity</div>
<div class="a" style="left:1063px;top:653.5px;width:97px;height:4px;background:#0078d7;border-radius:2px;"></div>
<div class="a" style="left:1154px;top:649px;width:13px;height:13px;background:#fff;border:1px solid #a8a8a8;border-radius:3px;"></div>
<div class="a" style="left:1171px;top:646px;width:100px;height:20px;background:#fff;border:1px solid #adadad;border-radius:3px;"></div>
<div class="a" style="left:1256px;top:647px;width:14px;height:18px;background:linear-gradient(#fdfdfd,#f3f3f3 45%,#e9e9e9);border-left:1px solid #c4c4c4;border-radius:0 2px 2px 0;"></div>
<svg class="a" style="left:1259.5px;top:650.0px;" width="7" height="12" viewBox="0 0 7 12"><path d="M0 4.5h7l-3.5-4z" fill="#b9b9b9"/><path d="M0 7.5h7l-3.5 4z" fill="#4d4d4d"/></svg>
<div class="t" style="left:1176.9px;top:648.89px;font-size:11px;line-height:16px;color:#000;transform:scaleX(1.0084);">100,0 %</div>
<div class="t" style="left:984.6px;top:677.99px;font-size:11px;line-height:16px;color:#000;transform:scaleX(0.9267);">Blending mode</div>
<div class="a" style="left:1062px;top:673px;width:209px;height:24px;border:1px solid #adadad;background:linear-gradient(#fdfdfd,#f3f3f3 45%,#e9e9e9);border-radius:3px;"></div>
<svg class="a" style="left:1255.5px;top:682.5px;" width="8" height="5" viewBox="0 0 8 5"><path d="M0 0h8l-4 4.5z" fill="#4d4d4d"/></svg>
<div class="t" style="left:1066.6px;top:677.99px;font-size:11px;line-height:16px;color:#000;transform:scaleX(0.9225);">Normal</div>
<div class="a" style="left:982px;top:715px;width:24px;height:23px;border:1px solid #adadad;background:linear-gradient(#fdfdfd,#f3f3f3 45%,#e9e9e9);border-radius:3px;"></div>
<div class="a" style="left:1012px;top:715px;width:24px;height:23px;border:1px solid #adadad;background:linear-gradient(#fdfdfd,#f3f3f3 45%,#e9e9e9);border-radius:3px;"></div>
<svg class="a" style="left:986.5px;top:718.5px;" width="15" height="16" viewBox="0 0 15 16"><path d="M3 10.700L9.800 2.700V7.800H14.500C18.500 7.800 21 10.500 21 14C21 17.500 18 20.800 12.200 21L12 18.200C14.500 17.800 15.800 16.500 15.800 15C15.800 13.600 14.800 13 13.500 13H9.800V18.900z" fill="#f0873a" transform="translate(-1.500,-1.500) scale(0.760)"/></svg>
<svg class="a" style="left:1016.5px;top:718.5px;" width="15" height="16" viewBox="0 0 15 16"><path d="M3 10.700L9.800 2.700V7.800H14.500C18.500 7.800 21 10.500 21 14C21 17.500 18 20.800 12.200 21L12 18.200C14.500 17.800 15.800 16.500 15.800 15C15.800 13.600 14.800 13 13.500 13H9.800V18.900z" fill="#73c08a" transform="translate(16.500,-1.500) scale(-0.760,0.760)"/></svg>
<div class="a" style="left:1110px;top:720px;width:13px;height:13px;background:#fff;border:1px solid #b5b5b5;"></div>
<svg class="a" style="left:1110px;top:720px;" width="13" height="13" viewBox="0 0 13 13"><path d="M3 6.2l2.6 3.3L10 2.8" stroke="#000" stroke-width="1.9" fill="none"/></svg>
<div class="t" style="left:1128px;top:719.19px;font-size:11px;line-height:16px;color:#000;transform:scaleX(0.9846);">Live update</div>
<div class="a" style="left:1197px;top:716px;width:80px;height:21px;border:1px solid #adadad;background:linear-gradient(#fdfdfd,#f3f3f3 45%,#e9e9e9);border-radius:3px;"></div>
<div class="t" style="left:1222.8px;top:719.19px;font-size:11px;line-height:16px;color:#000;transform:scaleX(0.9595);">Apply</div>
<div class="a" style="left:5px;top:744px;width:200px;height:22px;background:#fff;border:1px solid #b0b0b0;border-radius:3px;"></div>
<svg class="a" style="left:13px;top:749px;" width="13" height="13" viewBox="0 0 13 13"><circle cx="5" cy="5" r="3.8" fill="none" stroke="#8a8a8a" stroke-width="1.3"/><path d="M7.8 7.8l3.6 3.6" stroke="#8a8a8a" stroke-width="1.5"/></svg>
<div class="t" style="left:33.75px;top:748.02px;font-size:11.5px;line-height:16px;color:#757575;transform:scaleX(0.9650);">Type to locate (Ctrl+K)</div>
<div class="t" style="left:418.75px;top:748.02px;font-size:11.5px;line-height:16px;color:#000;transform:scaleX(0.9244);">Coordinate</div>
<div class="a" style="left:475px;top:744px;width:133px;height:21px;background:#fff;border:1px solid #b0b0b0;border-radius:3px;"></div>
<div class="t" style="left:482.5px;top:748.02px;font-size:11.5px;line-height:16px;color:#000;transform:scaleX(0.9693);white-space:pre;">-33,44843°  149,56077°</div>
<svg class="a" style="left:612px;top:747px;" width="16" height="16" viewBox="0 0 16 16"><g transform="rotate(-38 8 8)"><rect x="3.700" y="0.800" width="8.600" height="14.400" rx="4.200" fill="#fff" stroke="#111" stroke-width="1.300"/><path d="M3.700 7h8.600M8 1v6" stroke="#111" stroke-width="1.200"/><path d="M5 2.500v3.500M6.300 1.700v4.500" stroke="#111" stroke-width="0.900"/><circle cx="8" cy="11.300" r="1.500" fill="none" stroke="#111" stroke-width="1"/></g><path d="M12.300 2.300l1.500-1.300M0.300 10.800l1.500-.500" stroke="#333" stroke-width="0.800"/></svg>
<div class="t" style="left:640.5px;top:748.02px;font-size:11.5px;line-height:16px;color:#000;transform:scaleX(0.8517);">Scale</div>
<div class="a" style="left:669px;top:744px;width:89px;height:21px;background:#fff;border:1px solid #b0b0b0;border-radius:3px;"></div>
<div class="a" style="left:737px;top:745px;width:20px;height:19px;background:linear-gradient(#fdfdfd,#f3f3f3 45%,#e9e9e9);border-left:1px solid #c4c4c4;border-radius:0 2px 2px 0;"></div>
<svg class="a" style="left:742.5px;top:753px;" width="8" height="5" viewBox="0 0 8 5"><path d="M0 0h8l-4 4.5z" fill="#4d4d4d"/></svg>
<div class="t" style="left:673.75px;top:748.02px;font-size:11.5px;line-height:16px;color:#000;transform:scaleX(0.9450);">1:25.688</div>
<svg class="a" style="left:770px;top:747px;" width="13" height="16" viewBox="0 0 13 16"><path d="M3 7.500v-3a3.500 3.500 0 0 1 7 0v3" fill="none" stroke="#8c8c8c" stroke-width="1.900"/><rect x="0.500" y="7" width="12" height="8.500" rx="1.500" fill="#666"/><rect x="1.500" y="8" width="10" height="2" fill="#7c7c7c"/></svg>
<div class="t" style="left:790.5px;top:748.02px;font-size:11.5px;line-height:16px;color:#000;transform:scaleX(0.8986);">Magnifier</div>
<div class="a" style="left:838px;top:744px;width:84px;height:21px;background:#fff;border:1px solid #adadad;border-radius:3px;"></div>
<div class="a" style="left:907px;top:745px;width:14px;height:19px;background:linear-gradient(#fdfdfd,#f3f3f3 45%,#e9e9e9);border-left:1px solid #c4c4c4;border-radius:0 2px 2px 0;"></div>
<svg class="a" style="left:910.5px;top:748.5px;" width="7" height="12" viewBox="0 0 7 12"><path d="M0 4.5h7l-3.5-4z" fill="#4d4d4d"/><path d="M0 7.5h7l-3.5 4z" fill="#4d4d4d"/></svg>
<div class="t" style="left:843.75px;top:748.02px;font-size:11.5px;line-height:16px;color:#000;transform:scaleX(0.9282);">100%</div>
<div class="t" style="left:930.5px;top:748.02px;font-size:11.5px;line-height:16px;color:#000;transform:scaleX(0.9456);">Rotation</div>
<div class="a" style="left:981px;top:744px;width:84px;height:21px;background:#fff;border:1px solid #adadad;border-radius:3px;"></div>
<div class="a" style="left:1050px;top:745px;width:14px;height:19px;background:linear-gradient(#fdfdfd,#f3f3f3 45%,#e9e9e9);border-left:1px solid #c4c4c4;border-radius:0 2px 2px 0;"></div>
<svg class="a" style="left:1053.5px;top:748.5px;" width="7" height="12" viewBox="0 0 7 12"><path d="M0 4.5h7l-3.5-4z" fill="#4d4d4d"/><path d="M0 7.5h7l-3.5 4z" fill="#4d4d4d"/></svg>
<div class="t" style="left:986px;top:748.02px;font-size:11.5px;line-height:16px;color:#000;transform:scaleX(1.0009);">0,0 °</div>
<div class="a" style="left:1072px;top:749px;width:13px;height:13px;background:#fff;border:1px solid #b5b5b5;"></div>
<svg class="a" style="left:1072px;top:749px;" width="13" height="13" viewBox="0 0 13 13"><path d="M3 6.2l2.6 3.3L10 2.8" stroke="#000" stroke-width="1.9" fill="none"/></svg>
<div class="t" style="left:1089.75px;top:748.02px;font-size:11.5px;line-height:16px;color:#000;transform:scaleX(0.9095);">Render</div>
<svg class="a" style="left:1140px;top:748px;" width="16" height="15" viewBox="0 0 16 15"><g fill="none" stroke="#555" stroke-width="0.800"><ellipse cx="8" cy="7.500" rx="7.300" ry="6.800"/><ellipse cx="8" cy="7.500" rx="3.600" ry="6.800"/><path d="M8 0.700v13.600M0.700 7.500h14.600M1.800 4h12.400M1.800 11h12.400"/></g></svg>
<div class="t" style="left:1157.75px;top:748.02px;font-size:11.5px;line-height:16px;color:#000;transform:scaleX(0.8644);">EPSG:4979</div>
<svg class="a" style="left:1234px;top:748px;" width="18" height="16" viewBox="0 0 18 16"><ellipse cx="8.500" cy="6.800" rx="8.300" ry="6.600" fill="#666"/><path d="M9.500 12l7 3.300-2.500-5.300z" fill="#666"/></svg>
<div class="a" style="left:1277px;top:766px;width:1px;height:1px;background:#bdbdbd;"></div>
<div class="a" style="left:1274px;top:766px;width:1px;height:1px;background:#bdbdbd;"></div>
<div class="a" style="left:1271px;top:766px;width:1px;height:1px;background:#bdbdbd;"></div>
<div class="a" style="left:1268px;top:766px;width:1px;height:1px;background:#bdbdbd;"></div>
<div class="a" style="left:1277px;top:763px;width:1px;height:1px;background:#bdbdbd;"></div>
<div class="a" style="left:1274px;top:763px;width:1px;height:1px;background:#bdbdbd;"></div>
<div class="a" style="left:1271px;top:763px;width:1px;height:1px;background:#bdbdbd;"></div>
<div class="a" style="left:1277px;top:760px;width:1px;height:1px;background:#bdbdbd;"></div>
<div class="a" style="left:1274px;top:760px;width:1px;height:1px;background:#bdbdbd;"></div>
<div class="a" style="left:1277px;top:757px;width:1px;height:1px;background:#bdbdbd;"></div>
<div class="a" style="left:0px;top:0px;width:1281px;height:1px;background:#1b1b1b;"></div>
<div class="a" style="left:0px;top:0px;width:1px;height:770px;background:#1b1b1b;"></div>
<div class="a" style="left:1279px;top:0px;width:1px;height:770px;background:#8a8a8a;"></div>
<div class="a" style="left:1280px;top:0px;width:1px;height:770px;background:#1b1b1b;"></div>
<div class="a" style="left:1px;top:768px;width:1278px;height:1px;background:#f9f9f9;"></div>
<div class="a" style="left:0px;top:769px;width:1281px;height:1px;background:#1b1b1b;"></div>
</body></html>
